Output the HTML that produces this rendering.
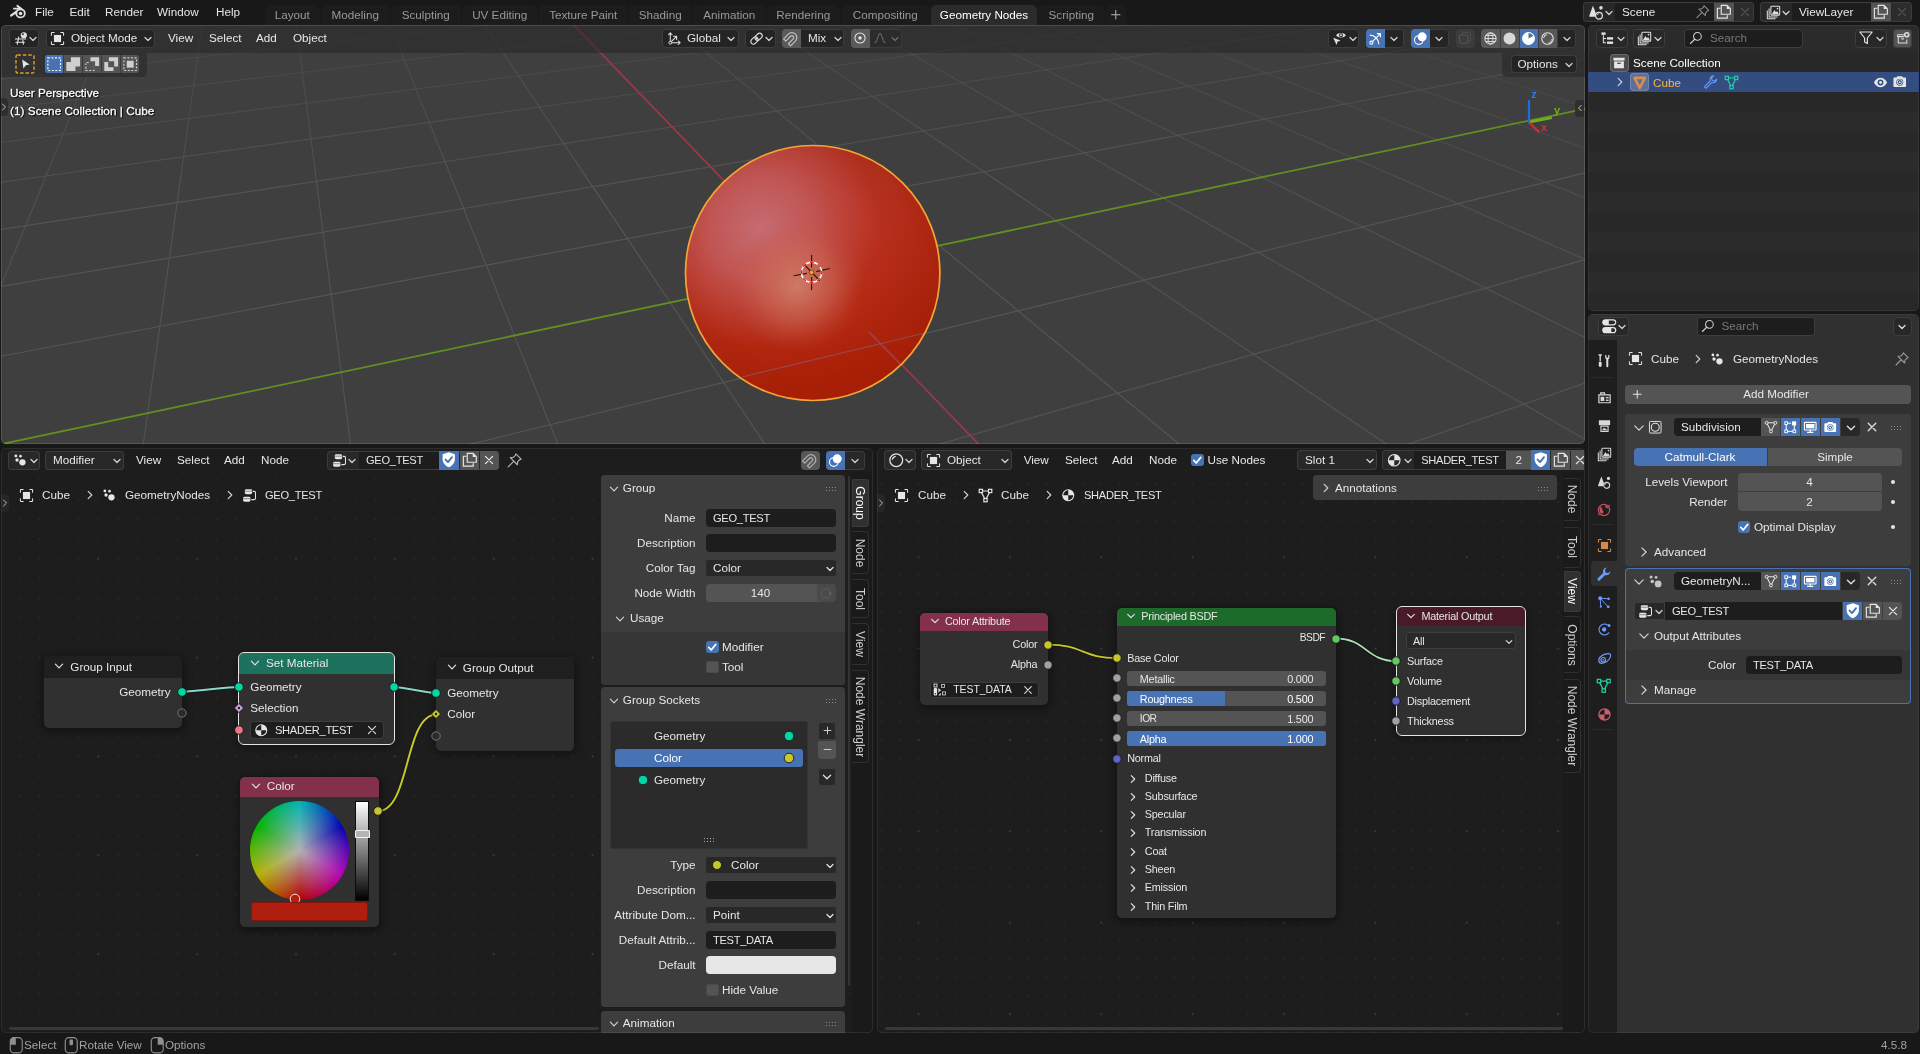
<!DOCTYPE html>
<html lang="en"><head><meta charset="utf-8"><title>Blender</title>
<style>
html,body{margin:0;padding:0;background:#181818;}
body{width:1920px;height:1054px;position:relative;overflow:hidden;font-family:"Liberation Sans", sans-serif;font-size:12px;}
div,svg{position:absolute;box-sizing:border-box;}
svg{overflow:visible;}
.t{height:20px;line-height:20px;white-space:nowrap;}
.clip{overflow:hidden;}
#w{left:0;top:0;width:1920px;height:1054px;will-change:transform;}
</style></head>
<body>
<div id="w">
<svg style="left:8.75px;top:2.75px;" width="18.5" height="18.5" viewBox="0 0 16 16"><path d="M1.2 10.2 L7.3 5.6 L4.3 5.6 A0.8 0.8 0 0 1 4.3 4 L8 4 L6.7 3 A0.8 0.8 0 0 1 7.7 1.7 L13.6 6.3 A4.6 4.3 0 1 1 5.4 9.6 L2.3 11.6 A0.85 0.85 0 0 1 1.2 10.2 Z" fill="#e0e0e0"/><ellipse cx="10" cy="9" rx="2.9" ry="2.7" fill="#181818"/><ellipse cx="10" cy="9" rx="1.6" ry="1.5" fill="#e0e0e0"/></svg>
<div class="t" style="top:2px;color:#e6e6e6;font-size:11.7px;left:35px;">File</div>
<div class="t" style="top:2px;color:#e6e6e6;font-size:11.7px;left:69.5px;">Edit</div>
<div class="t" style="top:2px;color:#e6e6e6;font-size:11.7px;left:105px;">Render</div>
<div class="t" style="top:2px;color:#e6e6e6;font-size:11.7px;left:157px;">Window</div>
<div class="t" style="top:2px;color:#e6e6e6;font-size:11.7px;left:216px;">Help</div>
<div style="left:264.5px;top:4.5px;width:55.5px;height:21.5px;background:#1c1c1c;border-radius:5px 5px 0 0;"></div>
<div class="t" style="top:5px;color:#989898;font-size:11.7px;left:292.25px;transform:translateX(-50%);">Layout</div>
<div style="left:320.5px;top:4.5px;width:69.5px;height:21.5px;background:#1c1c1c;border-radius:5px 5px 0 0;"></div>
<div class="t" style="top:5px;color:#989898;font-size:11.7px;left:355.25px;transform:translateX(-50%);">Modeling</div>
<div style="left:390.5px;top:4.5px;width:70.5px;height:21.5px;background:#1c1c1c;border-radius:5px 5px 0 0;"></div>
<div class="t" style="top:5px;color:#989898;font-size:11.7px;left:425.75px;transform:translateX(-50%);">Sculpting</div>
<div style="left:461.5px;top:4.5px;width:76.5px;height:21.5px;background:#1c1c1c;border-radius:5px 5px 0 0;"></div>
<div class="t" style="top:5px;color:#989898;font-size:11.7px;left:499.75px;transform:translateX(-50%);">UV Editing</div>
<div style="left:538.5px;top:4.5px;width:89.5px;height:21.5px;background:#1c1c1c;border-radius:5px 5px 0 0;"></div>
<div class="t" style="top:5px;color:#989898;font-size:11.7px;left:583.25px;transform:translateX(-50%);">Texture Paint</div>
<div style="left:628.5px;top:4.5px;width:63.5px;height:21.5px;background:#1c1c1c;border-radius:5px 5px 0 0;"></div>
<div class="t" style="top:5px;color:#989898;font-size:11.7px;left:660.25px;transform:translateX(-50%);">Shading</div>
<div style="left:692.5px;top:4.5px;width:73.5px;height:21.5px;background:#1c1c1c;border-radius:5px 5px 0 0;"></div>
<div class="t" style="top:5px;color:#989898;font-size:11.7px;left:729.25px;transform:translateX(-50%);">Animation</div>
<div style="left:766.5px;top:4.5px;width:73.5px;height:21.5px;background:#1c1c1c;border-radius:5px 5px 0 0;"></div>
<div class="t" style="top:5px;color:#989898;font-size:11.7px;left:803.25px;transform:translateX(-50%);">Rendering</div>
<div style="left:840.5px;top:4.5px;width:89.5px;height:21.5px;background:#1c1c1c;border-radius:5px 5px 0 0;"></div>
<div class="t" style="top:5px;color:#989898;font-size:11.7px;left:885.25px;transform:translateX(-50%);">Compositing</div>
<div style="left:931px;top:4.5px;width:106px;height:21.5px;background:#2b2b2b;border-radius:5px 5px 0 0;"></div>
<div class="t" style="top:5px;color:#ffffff;font-size:11.7px;left:984px;transform:translateX(-50%);">Geometry Nodes</div>
<div style="left:1037.5px;top:4.5px;width:67.5px;height:21.5px;background:#1c1c1c;border-radius:5px 5px 0 0;"></div>
<div class="t" style="top:5px;color:#989898;font-size:11.7px;left:1071.25px;transform:translateX(-50%);">Scripting</div>
<div style="left:1105.5px;top:4.5px;width:20.5px;height:21.5px;background:#1c1c1c;border-radius:5px 5px 0 0;"></div>
<svg style="left:1109px;top:7.75px;" width="13.5" height="13.5" viewBox="0 0 16 16"><path d="M8 2.5 V13.5 M2.5 8 H13.5" stroke="#b4b4b4" stroke-width="1.2" fill="none"/></svg>
<div style="left:1583px;top:2px;width:171px;height:20px;background:#282828;border-radius:4px;box-shadow:inset 0 0 0 1px #3d3d3d;"></div>
<div style="left:1614.5px;top:3px;width:99px;height:18px;background:#1d1d1d;"></div>
<div style="left:1714px;top:3px;width:20px;height:18px;background:#545454;"></div>
<div style="left:1734.5px;top:3px;width:18.5px;height:18px;background:#2c2c2c;border-radius:0 3px 3px 0;"></div>
<svg style="left:1587.5px;top:3.5px;" width="17" height="17" viewBox="0 0 16 16"><path d="M4.6 1.6 C5.6 4 7 7.4 7.6 9.6 A3.4 3.4 0 0 0 6.4 12 H1.8 A0.7 0.7 0 0 1 1.2 11 Z" fill="#e0e0e0"/><circle cx="10.3" cy="11" r="3.2" fill="none" stroke="#e0e0e0" stroke-width="1.2"/><path d="M8.6 10.4 A1.9 1.9 0 0 1 10 9.1" fill="none" stroke="#e0e0e0" stroke-width="0.9"/><circle cx="12.2" cy="3.6" r="1.7" fill="#e0e0e0"/></svg>
<svg style="left:1602.5px;top:6.5px;" width="12" height="12" viewBox="0 0 12 12"><path d="M3 4.5 L6 7.5 L9 4.5" fill="none" stroke="#cfcfcf" stroke-width="1.3" stroke-linecap="round" stroke-linejoin="round"/></svg>
<div class="t" style="top:2px;color:#e6e6e6;font-size:11.7px;left:1622px;">Scene</div>
<svg style="left:1695.25px;top:4.25px;" width="15.5" height="15.5" viewBox="0 0 16 16"><path d="M9.3 1.8 L14.2 6.7 L12.9 7.2 L11 9.1 L10.7 12 L4 5.3 L6.9 5 L8.8 3.1 Z" fill="none" stroke="#8a8a8a" stroke-width="1.1" stroke-linejoin="round"/><path d="M7 9 L2 14" stroke="#8a8a8a" stroke-width="1.1" stroke-linecap="round"/></svg>
<svg style="left:1716.25px;top:4.25px;" width="15.5" height="15.5" viewBox="0 0 16 16"><path d="M4.6 4.4 H1.4 V14.6 H11.6 V11.6" fill="none" stroke="#e6e6e6" stroke-width="1.2" stroke-linejoin="round"/><path d="M5.4 1.4 H11.4 L14.8 4.8 V10.6 H5.4 Z" fill="none" stroke="#e6e6e6" stroke-width="1.2" stroke-linejoin="round"/><path d="M11 1.4 V5.2 H14.8 Z" fill="#e6e6e6"/></svg>
<svg style="left:1738.5px;top:6px;" width="12" height="12" viewBox="0 0 12 12"><path d="M2.4 2.4 L9.6 9.6 M9.6 2.4 L2.4 9.6" fill="none" stroke="#555" stroke-width="1.3" stroke-linecap="round"/></svg>
<div style="left:1760px;top:2px;width:152px;height:20px;background:#282828;border-radius:4px;box-shadow:inset 0 0 0 1px #3d3d3d;"></div>
<div style="left:1791.5px;top:3px;width:79px;height:18px;background:#1d1d1d;"></div>
<div style="left:1871px;top:3px;width:20px;height:18px;background:#545454;"></div>
<div style="left:1891.5px;top:3px;width:19.5px;height:18px;background:#2c2c2c;border-radius:0 3px 3px 0;"></div>
<svg style="left:1765.5px;top:4.5px;" width="15" height="15" viewBox="0 0 16 16"><rect x="5.2" y="1.4" width="9.4" height="9.4" rx="0.8" fill="none" stroke="#e0e0e0" stroke-width="1.1"/><path d="M6.2 9.8 L9 5.4 L10.6 7.6 L11.8 6.4 L13.8 9.8 Z" fill="#e0e0e0"/><circle cx="12.3" cy="3.8" r="0.9" fill="#e0e0e0"/><path d="M3.3 3.6 V12.7 H12.4 M1.4 5.8 V14.6 H10.2" fill="none" stroke="#e0e0e0" stroke-width="1.1" stroke-linejoin="round"/></svg>
<svg style="left:1779.5px;top:6.5px;" width="12" height="12" viewBox="0 0 12 12"><path d="M3 4.5 L6 7.5 L9 4.5" fill="none" stroke="#cfcfcf" stroke-width="1.3" stroke-linecap="round" stroke-linejoin="round"/></svg>
<div class="t" style="top:2px;color:#e6e6e6;font-size:11.7px;left:1799px;">ViewLayer</div>
<svg style="left:1873.25px;top:4.25px;" width="15.5" height="15.5" viewBox="0 0 16 16"><path d="M4.6 4.4 H1.4 V14.6 H11.6 V11.6" fill="none" stroke="#e6e6e6" stroke-width="1.2" stroke-linejoin="round"/><path d="M5.4 1.4 H11.4 L14.8 4.8 V10.6 H5.4 Z" fill="none" stroke="#e6e6e6" stroke-width="1.2" stroke-linejoin="round"/><path d="M11 1.4 V5.2 H14.8 Z" fill="#e6e6e6"/></svg>
<svg style="left:1895.5px;top:6px;" width="12" height="12" viewBox="0 0 12 12"><path d="M2.4 2.4 L9.6 9.6 M9.6 2.4 L2.4 9.6" fill="none" stroke="#555" stroke-width="1.3" stroke-linecap="round"/></svg>
<div class="clip" style="left:1px;top:25px;width:1583.5px;height:419px;background:#3f3f3f;border-radius:5px;"><svg style="left:0;top:0" width="1584" height="419" viewBox="0 0 1584 419"><defs><linearGradient id="sb" x1="0" y1="0" x2="0.25" y2="1"><stop offset="0" stop-color="#b23b2f"/><stop offset="0.45" stop-color="#ba3322"/><stop offset="1" stop-color="#ad2107"/></linearGradient><radialGradient id="sh1" cx="0.30" cy="0.33" r="0.46"><stop offset="0" stop-color="#c66f77" stop-opacity="0.95"/><stop offset="0.45" stop-color="#c5676c" stop-opacity="0.65"/><stop offset="1" stop-color="#c05555" stop-opacity="0"/></radialGradient><radialGradient id="sh2" cx="0.44" cy="0.55" r="0.26"><stop offset="0" stop-color="#d07d68" stop-opacity="0.95"/><stop offset="0.55" stop-color="#cc6a56" stop-opacity="0.5"/><stop offset="1" stop-color="#c85040" stop-opacity="0"/></radialGradient><radialGradient id="sh3" cx="0.42" cy="0.45" r="0.6"><stop offset="0.55" stop-color="#a01c04" stop-opacity="0"/><stop offset="1" stop-color="#9c1c04" stop-opacity="0.55"/></radialGradient><linearGradient id="fade" x1="0" y1="0" x2="0" y2="1"><stop offset="0" stop-color="#3f3f3f" stop-opacity="0.55"/><stop offset="1" stop-color="#3f3f3f" stop-opacity="0"/></linearGradient><clipPath id="sc"><ellipse cx="811.7" cy="248" rx="127.2" ry="127.5"/></clipPath></defs><g stroke-width="1.15" fill="none"><line x1="-584.86" y1="-55" x2="-2033.1" y2="455" stroke="#575757" stroke-opacity="0.23"/><line x1="-505.46" y1="-55" x2="-1815.95" y2="455" stroke="#575757" stroke-opacity="0.29"/><line x1="-426.06" y1="-55" x2="-1598.83" y2="455" stroke="#575757" stroke-opacity="0.34"/><line x1="-346.68" y1="-55" x2="-1381.73" y2="455" stroke="#575757" stroke-opacity="0.4"/><line x1="-267.3" y1="-55" x2="-1164.66" y2="455" stroke="#575757" stroke-opacity="0.45"/><line x1="-187.93" y1="-55" x2="-947.61" y2="455" stroke="#575757" stroke-opacity="0.51"/><line x1="-108.57" y1="-55" x2="-730.58" y2="455" stroke="#575757" stroke-opacity="0.56"/><line x1="-29.22" y1="-55" x2="-513.58" y2="455" stroke="#575757" stroke-opacity="0.61"/><line x1="50.13" y1="-55" x2="-296.6" y2="455" stroke="#575757" stroke-opacity="0.67"/><line x1="129.46" y1="-55" x2="-79.64" y2="455" stroke="#575757" stroke-opacity="0.72"/><line x1="208.79" y1="-55" x2="137.29" y2="455" stroke="#575757" stroke-opacity="0.78"/><line x1="288.1" y1="-55" x2="354.2" y2="455" stroke="#575757" stroke-opacity="0.83"/><line x1="367.41" y1="-55" x2="571.08" y2="455" stroke="#575757" stroke-opacity="0.89"/><line x1="446.71" y1="-55" x2="787.94" y2="455" stroke="#575757" stroke-opacity="0.94"/><line x1="605.28" y1="-55" x2="1221.59" y2="455" stroke="#575757" stroke-opacity="0.94"/><line x1="684.56" y1="-55" x2="1438.38" y2="455" stroke="#575757" stroke-opacity="0.89"/><line x1="763.82" y1="-55" x2="1655.15" y2="455" stroke="#575757" stroke-opacity="0.83"/><line x1="843.08" y1="-55" x2="1871.89" y2="455" stroke="#575757" stroke-opacity="0.78"/><line x1="922.33" y1="-55" x2="2088.61" y2="455" stroke="#575757" stroke-opacity="0.72"/><line x1="1001.57" y1="-55" x2="2305.3" y2="455" stroke="#575757" stroke-opacity="0.67"/><line x1="1080.8" y1="-55" x2="2521.98" y2="455" stroke="#575757" stroke-opacity="0.61"/><line x1="1160.02" y1="-55" x2="2738.62" y2="455" stroke="#575757" stroke-opacity="0.56"/><line x1="1239.23" y1="-55" x2="2955.25" y2="455" stroke="#575757" stroke-opacity="0.51"/><line x1="1318.44" y1="-55" x2="3171.85" y2="455" stroke="#575757" stroke-opacity="0.45"/><line x1="1397.63" y1="-55" x2="3388.42" y2="455" stroke="#575757" stroke-opacity="0.4"/><line x1="1476.82" y1="-55" x2="3604.98" y2="455" stroke="#575757" stroke-opacity="0.34"/><line x1="1556" y1="-55" x2="3821.5" y2="455" stroke="#575757" stroke-opacity="0.29"/><line x1="1635.17" y1="-55" x2="4038.01" y2="455" stroke="#575757" stroke-opacity="0.23"/><line x1="-3147.87" y1="-55" x2="-14896.72" y2="455" stroke="#575757" stroke-opacity="0.12"/><line x1="-2968.32" y1="-55" x2="-14405.72" y2="455" stroke="#575757" stroke-opacity="0.12"/><line x1="-2788.78" y1="-55" x2="-13914.73" y2="455" stroke="#575757" stroke-opacity="0.12"/><line x1="-2609.24" y1="-55" x2="-13423.74" y2="455" stroke="#575757" stroke-opacity="0.12"/><line x1="-2429.7" y1="-55" x2="-12932.76" y2="455" stroke="#575757" stroke-opacity="0.12"/><line x1="-2250.17" y1="-55" x2="-12441.78" y2="455" stroke="#575757" stroke-opacity="0.12"/><line x1="-2070.63" y1="-55" x2="-11950.81" y2="455" stroke="#575757" stroke-opacity="0.12"/><line x1="-1891.1" y1="-55" x2="-11459.83" y2="455" stroke="#575757" stroke-opacity="0.12"/><line x1="-1711.56" y1="-55" x2="-10968.87" y2="455" stroke="#575757" stroke-opacity="0.12"/><line x1="-1532.03" y1="-55" x2="-10477.9" y2="455" stroke="#575757" stroke-opacity="0.12"/><line x1="-1352.5" y1="-55" x2="-9986.94" y2="455" stroke="#575757" stroke-opacity="0.12"/><line x1="-1172.97" y1="-55" x2="-9495.99" y2="455" stroke="#575757" stroke-opacity="0.12"/><line x1="-993.45" y1="-55" x2="-9005.04" y2="455" stroke="#575757" stroke-opacity="0.12"/><line x1="-813.92" y1="-55" x2="-8514.09" y2="455" stroke="#575757" stroke-opacity="0.15"/><line x1="-634.4" y1="-55" x2="-8023.14" y2="455" stroke="#575757" stroke-opacity="0.2"/><line x1="-454.87" y1="-55" x2="-7532.2" y2="455" stroke="#575757" stroke-opacity="0.25"/><line x1="-275.35" y1="-55" x2="-7041.27" y2="455" stroke="#575757" stroke-opacity="0.3"/><line x1="-95.83" y1="-55" x2="-6550.34" y2="455" stroke="#575757" stroke-opacity="0.35"/><line x1="83.69" y1="-55" x2="-6059.41" y2="455" stroke="#575757" stroke-opacity="0.4"/><line x1="263.2" y1="-55" x2="-5568.48" y2="455" stroke="#575757" stroke-opacity="0.45"/><line x1="442.72" y1="-55" x2="-5077.56" y2="455" stroke="#575757" stroke-opacity="0.5"/><line x1="622.23" y1="-55" x2="-4586.65" y2="455" stroke="#575757" stroke-opacity="0.55"/><line x1="801.75" y1="-55" x2="-4095.74" y2="455" stroke="#575757" stroke-opacity="0.6"/><line x1="981.26" y1="-55" x2="-3604.83" y2="455" stroke="#575757" stroke-opacity="0.65"/><line x1="1160.77" y1="-55" x2="-3113.92" y2="455" stroke="#575757" stroke-opacity="0.7"/><line x1="1340.28" y1="-55" x2="-2623.02" y2="455" stroke="#575757" stroke-opacity="0.75"/><line x1="1519.78" y1="-55" x2="-2132.13" y2="455" stroke="#575757" stroke-opacity="0.8"/><line x1="1699.29" y1="-55" x2="-1641.23" y2="455" stroke="#575757" stroke-opacity="0.85"/><line x1="1878.79" y1="-55" x2="-1150.35" y2="455" stroke="#575757" stroke-opacity="0.9"/><line x1="2058.29" y1="-55" x2="-659.46" y2="455" stroke="#575757" stroke-opacity="0.95"/><line x1="2417.29" y1="-55" x2="322.3" y2="455" stroke="#575757" stroke-opacity="0.95"/><line x1="2596.79" y1="-55" x2="813.17" y2="455" stroke="#575757" stroke-opacity="0.9"/><line x1="2776.29" y1="-55" x2="1304.04" y2="455" stroke="#575757" stroke-opacity="0.85"/></g><rect x="0" y="0" width="1584" height="170" fill="url(#fade)"/><line x1="0" y1="419.25" x2="1584" y2="83.76" stroke="#618f22" stroke-width="1.8"/><line x1="572.63" y1="0" x2="977.46" y2="419" stroke="#a0364a" stroke-width="1.7"/><ellipse cx="811.7" cy="248" rx="127.2" ry="127.5" fill="url(#sb)"/><g clip-path="url(#sc)"><ellipse cx="811.7" cy="248" rx="127.2" ry="127.5" fill="url(#sh3)"/><ellipse cx="811.7" cy="248" rx="127.2" ry="127.5" fill="url(#sh1)"/><ellipse cx="811.7" cy="248" rx="127.2" ry="127.5" fill="url(#sh2)"/><line x1="741" y1="352" x2="924" y2="308" stroke="#8d5560" stroke-width="1.2" stroke-opacity="0.8"/><line x1="868" y1="307" x2="925" y2="365" stroke="#a04660" stroke-width="1.5" stroke-opacity="0.9"/></g><ellipse cx="811.7" cy="248" rx="127.2" ry="127.5" fill="none" stroke="#f5a335" stroke-width="1.7"/><g stroke="#2a1612" stroke-width="1.15" fill="none"><path d="M810.6 229.9 V242.6 M810.6 252 V264.9 M792.6 250.8 L805.9 248.4 M815.3 246.6 L828.8 243.5 M803 239.3 L818.6 255.5"/></g><circle cx="810.6" cy="247.4" r="10.1" fill="none" stroke="#ffffff" stroke-width="1.4"/><circle cx="810.6" cy="247.4" r="10.1" fill="none" stroke="#f02020" stroke-width="1.4" stroke-dasharray="3.97 3.97" stroke-dashoffset="2"/><circle cx="810.6" cy="247.4" r="2.3" fill="#f5a32c" stroke="#5a2a00" stroke-width="0.7"/><g fill="none" stroke-width="2.2"><line x1="1528" y1="97.1" x2="1550.8" y2="92.6" stroke="#6fb01c" stroke-width="2.6"/><line x1="1527.5" y1="97.1" x2="1538.3" y2="107.1" stroke="#c4303e"/><line x1="1528" y1="97.6" x2="1528" y2="75.1" stroke="#1a6fe0"/></g><text x="1533" y="72.6" font-size="11" font-weight="bold" fill="#2a7be8" font-family='"Liberation Sans", sans-serif' text-anchor="middle">z</text><text x="1556" y="89" font-size="11" font-weight="bold" fill="#6fb01c" font-family='"Liberation Sans", sans-serif' text-anchor="middle">y</text><text x="1543" y="105.5" font-size="11" font-weight="bold" fill="#d03040" font-family='"Liberation Sans", sans-serif' text-anchor="middle">x</text></svg></div>
<div style="left:1px;top:25px;width:1583.5px;height:27.5px;background:rgba(38,38,38,0.55);border-radius:5px 5px 0 0;"></div>
<div style="left:1px;top:52.5px;width:146px;height:24px;background:rgba(38,38,38,0.55);border-radius:0 0 5px 0;"></div>
<div style="left:1px;top:25px;width:1583.5px;height:419px;border-radius:5px;box-shadow:inset 0 0 0 1px rgba(255,255,255,0.13);"></div>
<div style="left:9px;top:28.5px;width:30px;height:19px;background:rgba(34,34,34,0.85);border-radius:4px;box-shadow:inset 0 0 0 1px #3d3d3d;"></div>
<svg style="left:13.5px;top:30.5px;" width="15" height="15" viewBox="0 0 16 16"><path d="M1.5 8.5 H12.5 M2 12 H11 M5 6.5 L3.5 14 M9.5 10 L10 14" stroke="#e0e0e0" stroke-width="1.2" fill="none" stroke-linecap="round"/><circle cx="10.5" cy="4.5" r="3.3" fill="#e0e0e0"/><circle cx="9.5" cy="3.4" r="1.1" fill="#3a3a3a"/></svg>
<svg style="left:27px;top:33px;" width="12" height="12" viewBox="0 0 12 12"><path d="M3 4.5 L6 7.5 L9 4.5" fill="none" stroke="#cfcfcf" stroke-width="1.3" stroke-linecap="round" stroke-linejoin="round"/></svg>
<div style="left:46px;top:28.5px;width:109px;height:19px;background:rgba(34,34,34,0.85);border-radius:4px;box-shadow:inset 0 0 0 1px #3d3d3d;"></div>
<svg style="left:50px;top:30.5px;" width="15" height="15" viewBox="0 0 16 16"><rect x="4.2" y="4.2" width="7.6" height="7.6" fill="#e6e6e6"/><path d="M1.5 4.5 V2.3 A0.8 0.8 0 0 1 2.3 1.5 H4.5 M11.5 1.5 H13.7 A0.8 0.8 0 0 1 14.5 2.3 V4.5 M14.5 11.5 V13.7 A0.8 0.8 0 0 1 13.7 14.5 H11.5 M4.5 14.5 H2.3 A0.8 0.8 0 0 1 1.5 13.7 V11.5" fill="none" stroke="#e6e6e6" stroke-width="1.1" stroke-linecap="round"/></svg>
<div class="t" style="top:28px;color:#e6e6e6;font-size:11.7px;left:71px;">Object Mode</div>
<svg style="left:141.5px;top:33px;" width="12" height="12" viewBox="0 0 12 12"><path d="M3 4.5 L6 7.5 L9 4.5" fill="none" stroke="#cfcfcf" stroke-width="1.3" stroke-linecap="round" stroke-linejoin="round"/></svg>
<div class="t" style="top:28px;color:#e6e6e6;font-size:11.7px;left:168px;">View</div>
<div class="t" style="top:28px;color:#e6e6e6;font-size:11.7px;left:209px;">Select</div>
<div class="t" style="top:28px;color:#e6e6e6;font-size:11.7px;left:256px;">Add</div>
<div class="t" style="top:28px;color:#e6e6e6;font-size:11.7px;left:293px;">Object</div>
<svg style="left:15px;top:54px;" width="20" height="20" viewBox="0 0 20 20"><rect x="1" y="1" width="18" height="18" rx="1.5" fill="none" stroke="#e0a030" stroke-width="1.4" stroke-dasharray="3.4 2"/><path d="M7.2 5.4 L14.6 10.6 L10.8 11.2 L8.4 14.6 Z" fill="#e6e6e6"/></svg>
<div style="left:45px;top:55px;width:94px;height:18px;background:#545454;border-radius:3px;"></div>
<div style="left:45px;top:55px;width:18.4px;height:18px;background:#4772b3;border-radius:3px 0 0 3px;"></div>
<div style="left:63.4px;top:55px;width:1px;height:18px;background:#3a3a3a;"></div>
<div style="left:82.3px;top:55px;width:1px;height:18px;background:#3a3a3a;"></div>
<div style="left:101.2px;top:55px;width:1px;height:18px;background:#3a3a3a;"></div>
<div style="left:120.1px;top:55px;width:1px;height:18px;background:#3a3a3a;"></div>
<svg style="left:45.1px;top:54.8px;" width="18.4" height="18.4" viewBox="0 0 16 16"><rect x="2.5" y="2.5" width="11" height="11" fill="none" stroke="#ffffff" stroke-width="1" stroke-dasharray="1.7 1.4"/></svg>
<svg style="left:64px;top:54.8px;" width="18.4" height="18.4" viewBox="0 0 16 16"><path d="M6 2 H14 V10 H10 V14 H2 V6 H6 Z" fill="#cfcfcf"/></svg>
<svg style="left:82.9px;top:54.8px;" width="18.4" height="18.4" viewBox="0 0 16 16"><path d="M6.5 2 H14 V9.5 H10.5 V5.5 H6.5 Z" fill="#cfcfcf"/><path d="M5 6.5 H2.5 V13.5 H9.5 V11" fill="none" stroke="#cfcfcf" stroke-width="1" stroke-dasharray="1.7 1.4"/></svg>
<svg style="left:101.8px;top:54.8px;" width="18.4" height="18.4" viewBox="0 0 16 16"><path d="M6 2 H14 V10 H10.6 V5.4 H6 Z M2 6 H5.4 V10.6 H10 V14 H2 Z" fill="#cfcfcf"/></svg>
<svg style="left:120.7px;top:54.8px;" width="18.4" height="18.4" viewBox="0 0 16 16"><rect x="5" y="5" width="6" height="6" fill="#cfcfcf"/><rect x="2.5" y="2.5" width="11" height="11" fill="none" stroke="#cfcfcf" stroke-width="1" stroke-dasharray="1.7 1.4"/></svg>
<div class="t" style="top:83px;color:#ffffff;font-size:11.7px;left:10px;text-shadow:0 0 2px rgba(0,0,0,0.9),1px 1px 1px rgba(0,0,0,0.9);-webkit-text-stroke:0.3px #fff;">User Perspective</div>
<div class="t" style="top:101px;color:#ffffff;font-size:11.7px;letter-spacing:0.06px;left:10px;text-shadow:0 0 2px rgba(0,0,0,0.9),1px 1px 1px rgba(0,0,0,0.9);-webkit-text-stroke:0.3px #fff;">(1) Scene Collection | Cube</div>
<div style="left:1px;top:98px;width:7px;height:18px;background:rgba(40,40,40,0.7);border-radius:0 4px 4px 0;"></div>
<svg style="left:-2px;top:101px;" width="12" height="12" viewBox="0 0 12 12"><path d="M4.5 3 L7.5 6 L4.5 9" fill="none" stroke="#bdbdbd" stroke-width="1" stroke-linecap="round" stroke-linejoin="round"/></svg>
<div style="left:1575px;top:99.5px;width:9px;height:17px;background:rgba(44,44,44,0.85);border-radius:4px 0 0 4px;"></div>
<svg style="left:1574px;top:102px;" width="12" height="12" viewBox="0 0 12 12"><path d="M7.5 3 L4.5 6 L7.5 9" fill="none" stroke="#bdbdbd" stroke-width="1"/></svg>
<div style="left:661.5px;top:28.5px;width:77px;height:19px;background:rgba(34,34,34,0.85);border-radius:4px;box-shadow:inset 0 0 0 1px #3d3d3d;"></div>
<svg style="left:666.5px;top:30.5px;" width="15" height="15" viewBox="0 0 16 16"><path d="M3.5 12.5 V2 M1.6 4 L3.5 2 L5.4 4 M3.5 12.5 H14 M12 10.6 L14 12.5 L12 14.4 M3.5 12.5 L10 6 M7 5.7 L10.3 5.7 L10.3 9" fill="none" stroke="#e0e0e0" stroke-width="1.1" stroke-linejoin="round" stroke-linecap="round"/><circle cx="3.5" cy="12.5" r="1.5" fill="#262626" stroke="#e0e0e0" stroke-width="1"/></svg>
<div class="t" style="top:28px;color:#e6e6e6;font-size:11.7px;left:687px;">Global</div>
<svg style="left:725px;top:33px;" width="12" height="12" viewBox="0 0 12 12"><path d="M3 4.5 L6 7.5 L9 4.5" fill="none" stroke="#cfcfcf" stroke-width="1.3" stroke-linecap="round" stroke-linejoin="round"/></svg>
<div style="left:744.5px;top:28.5px;width:31px;height:19px;background:rgba(34,34,34,0.85);border-radius:4px;box-shadow:inset 0 0 0 1px #3d3d3d;"></div>
<svg style="left:748.5px;top:30.5px;" width="15" height="15" viewBox="0 0 16 16"><rect x="1.2" y="5.4" width="8.6" height="5.6" rx="2.8" fill="none" stroke="#e0e0e0" stroke-width="1.2" transform="rotate(-45 5.5 8.2) translate(-1.2 1.6)"/><rect x="6.2" y="5.4" width="8.6" height="5.6" rx="2.8" fill="none" stroke="#e0e0e0" stroke-width="1.2" transform="rotate(-45 10.5 8.2) translate(1.2 -1.6)"/><circle cx="8" cy="8" r="1.1" fill="#e0e0e0"/></svg>
<svg style="left:763px;top:33px;" width="12" height="12" viewBox="0 0 12 12"><path d="M3 4.5 L6 7.5 L9 4.5" fill="none" stroke="#cfcfcf" stroke-width="1.3" stroke-linecap="round" stroke-linejoin="round"/></svg>
<div style="left:782px;top:28.5px;width:62px;height:19px;background:rgba(34,34,34,0.85);border-radius:4px;box-shadow:inset 0 0 0 1px #3d3d3d;"></div>
<div style="left:782px;top:28.5px;width:19px;height:19px;background:#5a5a5a;border-radius:4px 0 0 4px;"></div>
<svg style="left:782.75px;top:29.25px;" width="17.5" height="17.5" viewBox="0 0 16 16"><path d="M3.5 2.6 H6.3 V8.8 A1.7 1.7 0 0 0 9.7 8.8 V2.6 H12.5 V8.8 A4.5 4.5 0 0 1 3.5 8.8 Z" fill="none" stroke="#c0c0c0" stroke-width="1.1" stroke-linejoin="round" transform="rotate(225 8 8) translate(0 -0.6)"/></svg>
<div class="t" style="top:28px;color:#e6e6e6;font-size:11.7px;left:808px;">Mix</div>
<svg style="left:832px;top:33px;" width="12" height="12" viewBox="0 0 12 12"><path d="M3 4.5 L6 7.5 L9 4.5" fill="none" stroke="#cfcfcf" stroke-width="1.3" stroke-linecap="round" stroke-linejoin="round"/></svg>
<div style="left:850.5px;top:28.5px;width:51px;height:19px;background:rgba(40,40,40,0.6);border-radius:4px;box-shadow:inset 0 0 0 1px rgba(70,70,70,0.6);"></div>
<div style="left:850.5px;top:28.5px;width:19px;height:19px;background:#5a5a5a;border-radius:4px 0 0 4px;"></div>
<svg style="left:853px;top:31px;" width="14" height="14" viewBox="0 0 16 16"><circle cx="8" cy="8" r="5.8" fill="none" stroke="#e6e6e6" stroke-width="1.2"/><circle cx="8" cy="8" r="2" fill="#e6e6e6"/></svg>
<svg style="left:873px;top:31px;" width="14" height="14" viewBox="0 0 16 16"><path d="M1.5 13.5 C5.5 13.5 5.6 2.5 8 2.5 C10.4 2.5 10.5 13.5 14.5 13.5" fill="none" stroke="#6a6a6a" stroke-width="1.2"/></svg>
<svg style="left:889px;top:33px;" width="12" height="12" viewBox="0 0 12 12"><path d="M3 4.5 L6 7.5 L9 4.5" fill="none" stroke="#6a6a6a" stroke-width="1.3" stroke-linecap="round" stroke-linejoin="round"/></svg>
<div style="left:1328px;top:28.5px;width:31px;height:19px;background:rgba(34,34,34,0.85);border-radius:4px;box-shadow:inset 0 0 0 1px #3d3d3d;"></div>
<svg style="left:1331.5px;top:30.5px;" width="15" height="15" viewBox="0 0 16 16"><path d="M4.4 4.6 C6.4 1.4 12.6 1.4 14.8 4.6 C12.6 7.8 6.4 7.8 4.4 4.6 Z" fill="#e0e0e0"/><circle cx="9.6" cy="4.4" r="2.1" fill="#2a2a2a"/><circle cx="9.6" cy="4.4" r="1" fill="#e0e0e0"/><path d="M1.2 7.2 L9.2 10.2 L5.9 11.4 L4.9 14.8 Z" fill="#e0e0e0"/></svg>
<svg style="left:1346.5px;top:33px;" width="12" height="12" viewBox="0 0 12 12"><path d="M3 4.5 L6 7.5 L9 4.5" fill="none" stroke="#cfcfcf" stroke-width="1.3" stroke-linecap="round" stroke-linejoin="round"/></svg>
<div style="left:1366px;top:28.5px;width:38px;height:19px;background:rgba(34,34,34,0.85);border-radius:4px;box-shadow:inset 0 0 0 1px #3d3d3d;"></div>
<div style="left:1366px;top:28.5px;width:18.5px;height:19px;background:#4772b3;border-radius:4px 0 0 4px;"></div>
<svg style="left:1367.5px;top:30.5px;" width="15" height="15" viewBox="0 0 16 16"><path d="M1.8 4.4 C7 4.4 11.6 8.6 11.6 14.2" fill="none" stroke="#ffffff" stroke-width="1.2"/><path d="M4.7 11.3 L13 3 M9.4 2.8 H13.2 V6.6" fill="none" stroke="#ffffff" stroke-width="1.2" stroke-linejoin="round"/><circle cx="3.6" cy="12.4" r="1.6" fill="none" stroke="#ffffff" stroke-width="1.1"/></svg>
<svg style="left:1388px;top:33px;" width="12" height="12" viewBox="0 0 12 12"><path d="M3 4.5 L6 7.5 L9 4.5" fill="none" stroke="#cfcfcf" stroke-width="1.3" stroke-linecap="round" stroke-linejoin="round"/></svg>
<div style="left:1411px;top:28.5px;width:38px;height:19px;background:rgba(34,34,34,0.85);border-radius:4px;box-shadow:inset 0 0 0 1px #3d3d3d;"></div>
<div style="left:1411px;top:28.5px;width:18.5px;height:19px;background:#4772b3;border-radius:4px 0 0 4px;"></div>
<svg style="left:1412.5px;top:30.5px;" width="15" height="15" viewBox="0 0 16 16"><circle cx="6.2" cy="9.6" r="4.6" fill="none" stroke="#ffffff" stroke-width="1.2"/><circle cx="9.8" cy="6.2" r="4.8" fill="#ffffff"/><path d="M5.4 8.8 A4.6 4.6 0 0 0 10.6 10.8 A4.8 4.8 0 0 1 5.4 8.8" fill="#4772b3"/></svg>
<svg style="left:1433px;top:33px;" width="12" height="12" viewBox="0 0 12 12"><path d="M3 4.5 L6 7.5 L9 4.5" fill="none" stroke="#cfcfcf" stroke-width="1.3" stroke-linecap="round" stroke-linejoin="round"/></svg>
<div style="left:1456px;top:28.5px;width:18.5px;height:19px;background:rgba(70,70,70,0.55);border-radius:4px;"></div>
<svg style="left:1458px;top:31px;" width="14" height="14" viewBox="0 0 16 16"><rect x="1.8" y="4.6" width="9.4" height="9.4" rx="1" fill="none" stroke="#5a5a5a" stroke-width="1.1"/><path d="M4.6 4.4 V2.6 A0.8 0.8 0 0 1 5.4 1.8 H13.4 A0.8 0.8 0 0 1 14.2 2.6 V10.6 A0.8 0.8 0 0 1 13.4 11.4 H11.4" fill="none" stroke="#5a5a5a" stroke-width="1.1" stroke-dasharray="2 1.4"/></svg>
<div style="left:1481px;top:28.5px;width:76px;height:19px;background:#585858;border-radius:4px 0 0 4px;"></div>
<div style="left:1519px;top:28.5px;width:19px;height:19px;background:#4772b3;"></div>
<div style="left:1499.5px;top:28.5px;width:1px;height:19px;background:#3e3e3e;"></div>
<div style="left:1518.5px;top:28.5px;width:1px;height:19px;background:#3e3e3e;"></div>
<div style="left:1537.5px;top:28.5px;width:1px;height:19px;background:#3e3e3e;"></div>
<svg style="left:1483px;top:30.5px;" width="15" height="15" viewBox="0 0 16 16"><circle cx="8" cy="8" r="6" fill="none" stroke="#e0e0e0" stroke-width="1.1"/><ellipse cx="8" cy="8" rx="2.6" ry="6" fill="none" stroke="#e0e0e0" stroke-width="1"/><path d="M2 8 H14 M3 4.8 H13 M3 11.2 H13" stroke="#e0e0e0" stroke-width="1" fill="none"/></svg>
<svg style="left:1502px;top:30.5px;" width="15" height="15" viewBox="0 0 16 16"><circle cx="8" cy="8" r="6.3" fill="#d8d8d8"/></svg>
<svg style="left:1521px;top:30.5px;" width="15" height="15" viewBox="0 0 16 16"><circle cx="8" cy="8" r="6.3" fill="none" stroke="#ffffff" stroke-width="1.1"/><path d="M8 1.7 A6.3 6.3 0 0 0 8 14.3 A6.3 6.3 0 0 0 13.6 5 L8 8 Z" fill="#ffffff"/></svg>
<svg style="left:1540px;top:30.5px;" width="15" height="15" viewBox="0 0 16 16"><circle cx="8" cy="8" r="6.1" fill="none" stroke="#e0e0e0" stroke-width="1.2"/><path d="M4 7 A4 4 0 0 1 7 4" fill="none" stroke="#e0e0e0" stroke-width="1.1" stroke-linecap="round"/><path d="M13 9 A5 5 0 0 1 9 13" fill="none" stroke="#e0e0e0" stroke-width="2.2" stroke-dasharray="0.8 0.8"/></svg>
<div style="left:1557px;top:28.5px;width:19px;height:19px;background:rgba(34,34,34,0.85);border-radius:0 4px 4px 0;box-shadow:inset 0 0 0 1px #3d3d3d;"></div>
<svg style="left:1560.5px;top:33px;" width="12" height="12" viewBox="0 0 12 12"><path d="M3 4.5 L6 7.5 L9 4.5" fill="none" stroke="#cfcfcf" stroke-width="1.3" stroke-linecap="round" stroke-linejoin="round"/></svg>
<div style="left:1502px;top:52.5px;width:82.5px;height:24px;background:rgba(38,38,38,0.55);border-radius:0 0 0 5px;"></div>
<div style="left:1510.5px;top:55px;width:66px;height:18px;background:rgba(34,34,34,0.85);border-radius:4px;box-shadow:inset 0 0 0 1px #3d3d3d;"></div>
<div class="t" style="top:54px;color:#e6e6e6;font-size:11.7px;left:1517.5px;">Options</div>
<svg style="left:1563px;top:59px;" width="12" height="12" viewBox="0 0 12 12"><path d="M3 4.5 L6 7.5 L9 4.5" fill="none" stroke="#cfcfcf" stroke-width="1.3" stroke-linecap="round" stroke-linejoin="round"/></svg>
<div style="left:1588px;top:25px;width:330.6px;height:286px;background:#282828;border-radius:5px;"></div>
<div style="left:1588px;top:72px;width:330.6px;height:20px;background:#2b2b2b;"></div>
<div style="left:1588px;top:112px;width:330.6px;height:20px;background:#2b2b2b;"></div>
<div style="left:1588px;top:152px;width:330.6px;height:20px;background:#2b2b2b;"></div>
<div style="left:1588px;top:192px;width:330.6px;height:20px;background:#2b2b2b;"></div>
<div style="left:1588px;top:232px;width:330.6px;height:20px;background:#2b2b2b;"></div>
<div style="left:1588px;top:272px;width:330.6px;height:20px;background:#2b2b2b;"></div>
<div style="left:1588px;top:25px;width:330.6px;height:27px;background:#2b2b2b;border-radius:5px 5px 0 0;"></div>
<div style="left:1588px;top:25px;width:330.6px;height:286px;border-radius:5px;box-shadow:inset 0 0 0 1px rgba(255,255,255,0.06);"></div>
<div style="left:1596px;top:28.5px;width:32px;height:19px;background:#282828;border-radius:4px;box-shadow:inset 0 0 0 1px #3d3d3d;"></div>
<svg style="left:1599.5px;top:30.5px;" width="15" height="15" viewBox="0 0 16 16"><rect x="1.5" y="1.5" width="4.5" height="2.6" fill="#e0e0e0"/><rect x="7.5" y="6.6" width="6.5" height="2.6" fill="#e0e0e0"/><rect x="7.5" y="11.2" width="6.5" height="2.6" fill="#e0e0e0"/><path d="M3.6 4.5 V12.5 H6.5 M3.6 8 H6.5" fill="none" stroke="#e0e0e0" stroke-width="1.1"/></svg>
<svg style="left:1615px;top:33px;" width="12" height="12" viewBox="0 0 12 12"><path d="M3 4.5 L6 7.5 L9 4.5" fill="none" stroke="#cfcfcf" stroke-width="1.3" stroke-linecap="round" stroke-linejoin="round"/></svg>
<div style="left:1633px;top:28.5px;width:32px;height:19px;background:#282828;border-radius:4px;box-shadow:inset 0 0 0 1px #3d3d3d;"></div>
<svg style="left:1637px;top:30.5px;" width="15" height="15" viewBox="0 0 16 16"><rect x="5.2" y="1.4" width="9.4" height="9.4" rx="0.8" fill="none" stroke="#e0e0e0" stroke-width="1.1"/><path d="M6.2 9.8 L9 5.4 L10.6 7.6 L11.8 6.4 L13.8 9.8 Z" fill="#e0e0e0"/><circle cx="12.3" cy="3.8" r="0.9" fill="#e0e0e0"/><path d="M3.3 3.6 V12.7 H12.4 M1.4 5.8 V14.6 H10.2" fill="none" stroke="#e0e0e0" stroke-width="1.1" stroke-linejoin="round"/></svg>
<svg style="left:1652px;top:33px;" width="12" height="12" viewBox="0 0 12 12"><path d="M3 4.5 L6 7.5 L9 4.5" fill="none" stroke="#cfcfcf" stroke-width="1.3" stroke-linecap="round" stroke-linejoin="round"/></svg>
<div style="left:1684px;top:28.5px;width:119px;height:19px;background:#1d1d1d;border-radius:4px;box-shadow:inset 0 0 0 1px #3d3d3d;"></div>
<svg style="left:1689px;top:31px;" width="14" height="14" viewBox="0 0 16 16"><circle cx="9.6" cy="6.2" r="4.4" fill="none" stroke="#d0d0d0" stroke-width="1.2"/><path d="M6.5 9.4 L1.6 14.3" stroke="#d0d0d0" stroke-width="1.3" stroke-linecap="round"/></svg>
<div class="t" style="top:28px;color:#777777;font-size:11.7px;left:1710px;">Search</div>
<div style="left:1855px;top:28.5px;width:32px;height:19px;background:#282828;border-radius:4px;box-shadow:inset 0 0 0 1px #3d3d3d;"></div>
<svg style="left:1858px;top:30px;" width="16" height="16" viewBox="0 0 16 16"><path d="M1.8 2 H14.2 L9.4 8 V13.6 L6.6 12 V8 Z" fill="none" stroke="#e0e0e0" stroke-width="1.2" stroke-linejoin="round"/></svg>
<svg style="left:1874px;top:33px;" width="12" height="12" viewBox="0 0 12 12"><path d="M3 4.5 L6 7.5 L9 4.5" fill="none" stroke="#cfcfcf" stroke-width="1.3" stroke-linecap="round" stroke-linejoin="round"/></svg>
<div style="left:1893px;top:28.5px;width:19px;height:19px;background:#545454;border-radius:4px;box-shadow:inset 0 0 0 1px #3d3d3d;"></div>
<svg style="left:1895.5px;top:31px;" width="14" height="14" viewBox="0 0 16 16"><path d="M1.8 4.2 H9.5 M1.8 4.2 V6.4 H9 M2.6 6.6 V13.6 H12.4 V9.6" fill="none" stroke="#e0e0e0" stroke-width="1.2" stroke-linejoin="round"/><path d="M5.8 9 H9.2" stroke="#e0e0e0" stroke-width="1.2"/><circle cx="12.3" cy="4.3" r="3.2" fill="#e0e0e0"/><path d="M10.6 4.3 H14 M12.3 2.6 V6" stroke="#545454" stroke-width="1.1"/></svg>
<div style="left:1610px;top:53.5px;width:18.5px;height:18px;background:#4d4d4d;border-radius:4px;box-shadow:inset 0 0 0 1px #6a6a6a;"></div>
<svg style="left:1612px;top:55.5px;" width="14" height="14" viewBox="0 0 16 16"><rect x="1.6" y="2" width="12.8" height="3.2" fill="#e6e6e6"/><path d="M2.4 6.2 H13.6 V14 H2.4 Z" fill="#e6e6e6"/><rect x="6" y="7.6" width="4" height="1.5" fill="#4d4d4d"/></svg>
<div class="t" style="top:52.5px;color:#ffffff;font-size:11.7px;left:1633px;">Scene Collection</div>
<div style="left:1588px;top:72px;width:330.6px;height:20px;background:#334d80;"></div>
<svg style="left:1613.5px;top:76px;" width="12" height="12" viewBox="0 0 12 12"><path d="M4.2 2.4 L7.8 6 L4.2 9.6" fill="none" stroke="#d0d0d0" stroke-width="1.2" stroke-linecap="round" stroke-linejoin="round"/></svg>
<div style="left:1630px;top:73px;width:18.5px;height:18px;background:#5b6f9a;border-radius:4px;box-shadow:inset 0 0 0 1px #7386ad;"></div>
<svg style="left:1631.55px;top:74.75px;" width="15.5" height="15.5" viewBox="0 0 16 16"><path d="M2.6 3 H13.4 L8 13.4 Z" fill="none" stroke="#d98f4e" stroke-width="2.7" stroke-linejoin="round"/></svg>
<div class="t" style="top:72.6px;color:#ffb340;font-size:11.7px;left:1653px;">Cube</div>
<svg style="left:1703.25px;top:74.25px;" width="15.5" height="15.5" viewBox="0 0 16 16"><path d="M10.8 1.9 A3.7 3.7 0 0 0 7.5 7 L2.1 12.4 A1.2 1.2 0 0 0 3.8 14.1 L9.2 8.7 A3.7 3.7 0 0 0 14.2 5.4 L12 7.3 L9.5 6.6 L8.8 4.1 Z" fill="none" stroke="#6c9bff" stroke-width="1.1" stroke-linejoin="round"/></svg>
<svg style="left:1723.5px;top:74.5px;" width="15" height="15" viewBox="0 0 16 16"><path d="M4.6 3.2 H11.4 M3.9 5 L7.2 11.4 M12.1 5 L8.8 11.4" fill="none" stroke="#1fd3a6" stroke-width="1.3"/><rect x="1.3" y="1.4" width="3.5" height="3.5" fill="none" stroke="#1fd3a6" stroke-width="1.25"/><rect x="11.2" y="1.4" width="3.5" height="3.5" fill="none" stroke="#1fd3a6" stroke-width="1.25"/><rect x="6.25" y="11.2" width="3.5" height="3.5" fill="none" stroke="#1fd3a6" stroke-width="1.25"/></svg>
<svg style="left:1872.5px;top:74.5px;" width="15" height="15" viewBox="0 0 16 16"><path d="M1 8 C3 4.2 5.6 3 8 3 C10.4 3 13 4.2 15 8 C13 11.8 10.4 13 8 13 C5.6 13 3 11.8 1 8 Z" fill="#e6e6e6"/><circle cx="8" cy="8" r="3.1" fill="#334d80"/><circle cx="8" cy="8" r="1.5" fill="#e6e6e6"/></svg>
<svg style="left:1892.25px;top:74.25px;" width="15.5" height="15.5" viewBox="0 0 16 16"><path d="M1.5 4.6 A0.9 0.9 0 0 1 2.4 3.7 H4.6 L5.6 2.2 H10.4 L11.4 3.7 H13.6 A0.9 0.9 0 0 1 14.5 4.6 V12.4 A0.9 0.9 0 0 1 13.6 13.3 H2.4 A0.9 0.9 0 0 1 1.5 12.4 Z" fill="#e6e6e6"/><circle cx="8" cy="8.4" r="3.6" fill="#334d80"/><circle cx="8" cy="8.4" r="2.6" fill="none" stroke="#e6e6e6" stroke-width="1"/><circle cx="8" cy="8.4" r="0.9" fill="#e6e6e6"/></svg>
<div style="left:1588px;top:314px;width:330.6px;height:718.5px;background:#303030;border-radius:5px;"></div>
<div style="left:1588px;top:340px;width:29px;height:692.5px;background:#1e1e1e;border-radius:0 0 0 5px;"></div>
<div style="left:1588px;top:314px;width:330.6px;height:718.5px;border-radius:5px;box-shadow:inset 0 0 0 1px rgba(255,255,255,0.06);"></div>
<div style="left:1597.5px;top:316.5px;width:31px;height:19px;background:#282828;border-radius:4px;box-shadow:inset 0 0 0 1px #3d3d3d;"></div>
<svg style="left:1600.75px;top:317.75px;" width="16.5" height="16.5" viewBox="0 0 16 16"><rect x="1.2" y="1.2" width="13.6" height="6" rx="3" fill="#e6e6e6"/><path d="M7.6 2.4 H11.8 A1.8 1.8 0 0 1 11.8 6 H7.6 Z" fill="#282828"/><rect x="1.2" y="8.8" width="13.6" height="6" rx="3" fill="#e6e6e6"/><path d="M10 10 H11.8 A1.8 1.8 0 0 1 11.8 13.6 H10 Z" fill="#282828"/></svg>
<svg style="left:1616px;top:321px;" width="12" height="12" viewBox="0 0 12 12"><path d="M3 4.5 L6 7.5 L9 4.5" fill="none" stroke="#cfcfcf" stroke-width="1.3" stroke-linecap="round" stroke-linejoin="round"/></svg>
<div style="left:1696.5px;top:316.5px;width:118px;height:19px;background:#1d1d1d;border-radius:4px;box-shadow:inset 0 0 0 1px #3d3d3d;"></div>
<svg style="left:1701px;top:319px;" width="14" height="14" viewBox="0 0 16 16"><circle cx="9.6" cy="6.2" r="4.4" fill="none" stroke="#d0d0d0" stroke-width="1.2"/><path d="M6.5 9.4 L1.6 14.3" stroke="#d0d0d0" stroke-width="1.3" stroke-linecap="round"/></svg>
<div class="t" style="top:316px;color:#777777;font-size:11.7px;left:1721.5px;">Search</div>
<div style="left:1892.5px;top:316.5px;width:19px;height:19px;background:#282828;border-radius:4px;box-shadow:inset 0 0 0 1px #3d3d3d;"></div>
<svg style="left:1896px;top:321px;" width="12" height="12" viewBox="0 0 12 12"><path d="M3 4.5 L6 7.5 L9 4.5" fill="none" stroke="#e0e0e0" stroke-width="1.3" stroke-linecap="round" stroke-linejoin="round"/></svg>
<div style="left:1591px;top:560.6px;width:26px;height:25.4px;background:#303030;border-radius:4px 0 0 4px;"></div>
<svg style="left:1596px;top:352.5px;" width="16" height="16" viewBox="0 0 16 16"><path d="M4.2 2 V8.4 M2.6 2 H5.8" stroke="#e0e0e0" stroke-width="1.3" fill="none"/><path d="M2.8 9 H5.6 V12.6 A1.4 1.4 0 0 1 2.8 12.6 Z" fill="#e0e0e0"/><path d="M9.2 2 V4.6 A1.8 1.8 0 0 0 10.3 6.3 V13.2 A1 1 0 0 0 12.3 13.2 V6.3 A1.8 1.8 0 0 0 13.4 4.6 V2 L12.2 2 V4.4 H10.4 V2 Z" fill="#e0e0e0"/></svg>
<div style="left:1592px;top:376.5px;width:22px;height:1px;background:#2a2a2a;"></div>
<svg style="left:1596.5px;top:389.5px;" width="15" height="15" viewBox="0 0 16 16"><path d="M2 5.2 H14 V13.6 H2 Z" fill="none" stroke="#d8d8d8" stroke-width="1.3"/><path d="M4 5 V3 H8 V5" fill="none" stroke="#d8d8d8" stroke-width="1.3"/><rect x="9.4" y="7.4" width="3" height="1.5" fill="#d8d8d8"/><rect x="9.4" y="10.2" width="3" height="1.5" fill="#d8d8d8"/><rect x="3.8" y="7.2" width="4" height="4.6" fill="#d8d8d8"/></svg>
<svg style="left:1596.5px;top:418px;" width="15" height="15" viewBox="0 0 16 16"><path d="M2 2.4 H14 V7.6 H2 Z" fill="#d8d8d8"/><path d="M4.2 8.6 H11.8 V14.2 H4.2 Z" fill="none" stroke="#d8d8d8" stroke-width="1.2"/><path d="M5.4 13 L7.4 10.2 L8.6 11.6 L9.4 10.8 L10.8 13 Z" fill="#d8d8d8"/></svg>
<svg style="left:1596.5px;top:446.5px;" width="15" height="15" viewBox="0 0 16 16"><rect x="5.2" y="1.4" width="9.4" height="9.4" rx="0.8" fill="none" stroke="#d8d8d8" stroke-width="1.1"/><path d="M6.2 9.8 L9 5.4 L10.6 7.6 L11.8 6.4 L13.8 9.8 Z" fill="#d8d8d8"/><circle cx="12.3" cy="3.8" r="0.9" fill="#d8d8d8"/><path d="M3.3 3.6 V12.7 H12.4 M1.4 5.8 V14.6 H10.2" fill="none" stroke="#d8d8d8" stroke-width="1.1" stroke-linejoin="round"/></svg>
<svg style="left:1596.5px;top:474.5px;" width="15" height="15" viewBox="0 0 16 16"><path d="M4.6 1.6 C5.6 4 7 7.4 7.6 9.6 A3.4 3.4 0 0 0 6.4 12 H1.8 A0.7 0.7 0 0 1 1.2 11 Z" fill="#d8d8d8"/><circle cx="10.3" cy="11" r="3.2" fill="none" stroke="#d8d8d8" stroke-width="1.2"/><path d="M8.6 10.4 A1.9 1.9 0 0 1 10 9.1" fill="none" stroke="#d8d8d8" stroke-width="0.9"/><circle cx="12.2" cy="3.6" r="1.7" fill="#d8d8d8"/></svg>
<svg style="left:1596px;top:502px;" width="16" height="16" viewBox="0 0 16 16"><circle cx="8" cy="8" r="5.6" fill="none" stroke="#c4505c" stroke-width="1.2"/><path d="M4 5.2 C5.6 5 6.6 6 6.2 7.2 C5.8 8.4 7.6 8.6 7.4 10 C7.2 11.4 6 11.8 5 11.2 C3.8 10.4 3 7.4 4 5.2 Z M9 3.2 C10.6 3.6 12 4.6 12.6 6 C11.6 6.6 10.2 6.2 9.6 5.2 Z" fill="#c4505c"/><path d="M2 13.2 L3.4 11.8 M12.6 4.2 L14 2.8" stroke="#c4505c" stroke-width="1.1"/></svg>
<div style="left:1592px;top:524px;width:22px;height:1px;background:#2a2a2a;"></div>
<svg style="left:1596.5px;top:538px;" width="15" height="15" viewBox="0 0 16 16"><rect x="4.2" y="4.2" width="7.6" height="7.6" fill="#d38a4b"/><path d="M1.5 4.5 V2.3 A0.8 0.8 0 0 1 2.3 1.5 H4.5 M11.5 1.5 H13.7 A0.8 0.8 0 0 1 14.5 2.3 V4.5 M14.5 11.5 V13.7 A0.8 0.8 0 0 1 13.7 14.5 H11.5 M4.5 14.5 H2.3 A0.8 0.8 0 0 1 1.5 13.7 V11.5" fill="none" stroke="#d38a4b" stroke-width="1.1" stroke-linecap="round"/></svg>
<svg style="left:1596px;top:566px;" width="16" height="16" viewBox="0 0 16 16"><path d="M10.8 1.6 A3.9 3.9 0 0 0 7.2 6.9 L1.9 12.2 A1.4 1.4 0 0 0 3.9 14.2 L9.2 8.9 A3.9 3.9 0 0 0 14.4 5.2 L12 7.2 L9.6 6.4 L8.9 4 Z" fill="#6c9bff"/></svg>
<svg style="left:1596.5px;top:594.5px;" width="15" height="15" viewBox="0 0 16 16"><circle cx="3.4" cy="3.4" r="2" fill="#6c9bff"/><circle cx="12.4" cy="4" r="1.3" fill="#6c9bff"/><circle cx="12" cy="12.6" r="1.5" fill="#6c9bff"/><circle cx="4" cy="12.4" r="1.1" fill="#6c9bff"/><path d="M3.4 3.4 L12.4 4 M3.4 3.4 L12 12.6 M3.4 3.4 L4 12.4" stroke="#6c9bff" stroke-width="1" fill="none"/></svg>
<svg style="left:1596.5px;top:622px;" width="15" height="15" viewBox="0 0 16 16"><path d="M12.6 11.6 A5.8 5.8 0 1 1 10.6 2.8" fill="none" stroke="#6c9bff" stroke-width="1.3" stroke-linecap="round"/><circle cx="7.6" cy="8" r="2.3" fill="#6c9bff"/><circle cx="12.8" cy="3.6" r="1.6" fill="#6c9bff"/></svg>
<svg style="left:1596.5px;top:650.5px;" width="15" height="15" viewBox="0 0 16 16"><path d="M2 11 C1.4 7 5 4.6 8.6 3.4 C11.6 2.4 14 2.6 14.4 4 C14.8 5.6 13.6 8.4 11 10.8 C8.4 13.2 2.6 14.4 2 11 Z" fill="none" stroke="#6c9bff" stroke-width="1.3"/><circle cx="6.6" cy="9.4" r="2.5" fill="none" stroke="#6c9bff" stroke-width="1.2"/><circle cx="6.6" cy="9.4" r="0.9" fill="#6c9bff"/></svg>
<svg style="left:1596.25px;top:678.25px;" width="15.5" height="15.5" viewBox="0 0 16 16"><path d="M4.6 3.2 H11.4 M3.9 5 L7.2 11.4 M12.1 5 L8.8 11.4" fill="none" stroke="#1fd3a6" stroke-width="1.3"/><rect x="1.3" y="1.4" width="3.5" height="3.5" fill="none" stroke="#1fd3a6" stroke-width="1.25"/><rect x="11.2" y="1.4" width="3.5" height="3.5" fill="none" stroke="#1fd3a6" stroke-width="1.25"/><rect x="6.25" y="11.2" width="3.5" height="3.5" fill="none" stroke="#1fd3a6" stroke-width="1.25"/></svg>
<svg style="left:1596.5px;top:706.5px;" width="15" height="15" viewBox="0 0 16 16"><circle cx="8" cy="8" r="6.6" fill="#c8606a"/><path d="M8 8 L8 2.6 A5.4 5.4 0 0 0 2.6 8 Z M8 8 L8 13.4 A5.4 5.4 0 0 0 13.4 8 Z" fill="#1e1e1e"/></svg>
<div style="left:1592px;top:729px;width:22px;height:1px;background:#2a2a2a;"></div>
<svg style="left:1627.5px;top:351px;" width="15" height="15" viewBox="0 0 16 16"><rect x="4.2" y="4.2" width="7.6" height="7.6" fill="#e6e6e6"/><path d="M1.5 4.5 V2.3 A0.8 0.8 0 0 1 2.3 1.5 H4.5 M11.5 1.5 H13.7 A0.8 0.8 0 0 1 14.5 2.3 V4.5 M14.5 11.5 V13.7 A0.8 0.8 0 0 1 13.7 14.5 H11.5 M4.5 14.5 H2.3 A0.8 0.8 0 0 1 1.5 13.7 V11.5" fill="none" stroke="#e6e6e6" stroke-width="1.1" stroke-linecap="round"/></svg>
<div class="t" style="top:348.5px;color:#e6e6e6;font-size:11.7px;left:1651px;">Cube</div>
<svg style="left:1692px;top:352.5px;" width="12" height="12" viewBox="0 0 12 12"><path d="M4.2 2.4 L7.8 6 L4.2 9.6" fill="none" stroke="#d0d0d0" stroke-width="1.2" stroke-linecap="round" stroke-linejoin="round"/></svg>
<svg style="left:1710px;top:351.5px;" width="14" height="14" viewBox="0 0 16 16"><circle cx="3.3" cy="3.3" r="1.6" fill="#e6e6e6"/><circle cx="8.6" cy="3.6" r="1.5" fill="#e6e6e6"/><circle cx="4.6" cy="8" r="1.9" fill="#e6e6e6"/><circle cx="10.8" cy="10.6" r="3.6" fill="#e6e6e6"/></svg>
<div class="t" style="top:348.5px;color:#e6e6e6;font-size:11.7px;left:1733px;">GeometryNodes</div>
<svg style="left:1894px;top:350.5px;" width="16" height="16" viewBox="0 0 16 16"><path d="M9.3 1.8 L14.2 6.7 L12.9 7.2 L11 9.1 L10.7 12 L4 5.3 L6.9 5 L8.8 3.1 Z" fill="none" stroke="#9a9a9a" stroke-width="1.1" stroke-linejoin="round"/><path d="M7 9 L2 14" stroke="#9a9a9a" stroke-width="1.1" stroke-linecap="round"/></svg>
<div style="left:1625px;top:384.5px;width:285.6px;height:19px;background:#545454;border-radius:4px;"></div>
<svg style="left:1631.25px;top:387.75px;" width="12.5" height="12.5" viewBox="0 0 16 16"><path d="M8 2.5 V13.5 M2.5 8 H13.5" stroke="#f0f0f0" stroke-width="1.2" fill="none"/></svg>
<div class="t" style="top:384px;color:#e6e6e6;font-size:11.7px;left:1776px;transform:translateX(-50%);">Add Modifier</div>
<div style="left:1624.8px;top:414px;width:286px;height:152px;background:#3d3d3d;border-radius:4px;"></div>
<svg style="left:1632.5px;top:421.5px;" width="12" height="12" viewBox="0 0 12 12"><path d="M1.8 3.9 L6 8.1 L10.2 3.9" fill="none" stroke="#d8d8d8" stroke-width="1.15" stroke-linecap="round" stroke-linejoin="round"/></svg>
<svg style="left:1647.75px;top:419.75px;" width="14.5" height="14.5" viewBox="0 0 16 16"><rect x="1.6" y="1.6" width="12.8" height="12.8" rx="1" fill="none" stroke="#e0e0e0" stroke-width="1.1"/><circle cx="8" cy="8" r="4.4" fill="none" stroke="#e0e0e0" stroke-width="1.2"/></svg>
<div style="left:1673.5px;top:418px;width:87px;height:18px;background:#1d1d1d;border-radius:4px 0 0 4px;"></div>
<div class="t" style="top:417px;color:#e6e6e6;font-size:11.7px;left:1681px;">Subdivision</div>
<div style="left:1760.5px;top:418px;width:19.7px;height:18px;background:#545454;"></div>
<svg style="left:1763.5px;top:420px;" width="14" height="14" viewBox="0 0 16 16"><path d="M3 3.2 H13 L8 13 Z" fill="none" stroke="#e6e6e6" stroke-width="1.2" stroke-linejoin="round"/><circle cx="3" cy="3.2" r="1.7" fill="#545454" stroke="#e6e6e6" stroke-width="1.1"/><circle cx="13" cy="3.2" r="1.7" fill="#545454" stroke="#e6e6e6" stroke-width="1.1"/><circle cx="8" cy="13" r="1.7" fill="#545454" stroke="#e6e6e6" stroke-width="1.1"/></svg>
<div style="left:1781px;top:418px;width:19.2px;height:18px;background:#4772b3;"></div>
<svg style="left:1783.35px;top:419.75px;" width="14.5" height="14.5" viewBox="0 0 16 16"><path d="M3.5 5 V11 M5 12.5 H11 M12.5 11 V5.5 M5 3.5 H9" fill="none" stroke="#ffffff" stroke-width="1.1"/><rect x="2" y="2" width="3" height="3" fill="none" stroke="#ffffff" stroke-width="1"/><rect x="2" y="11" width="3" height="3" fill="none" stroke="#ffffff" stroke-width="1"/><rect x="11" y="11" width="3" height="3" fill="none" stroke="#ffffff" stroke-width="1"/><rect x="10" y="1.5" width="4.5" height="4.5" fill="#ffffff"/></svg>
<div style="left:1801px;top:418px;width:19.2px;height:18px;background:#4772b3;"></div>
<svg style="left:1803.35px;top:419.75px;" width="14.5" height="14.5" viewBox="0 0 16 16"><rect x="1.6" y="2.6" width="12.8" height="8.4" rx="0.8" fill="none" stroke="#ffffff" stroke-width="1.2"/><rect x="3.4" y="4.4" width="9.2" height="4.8" fill="#ffffff"/><path d="M8 11 V13.4 M5 13.6 H11" stroke="#ffffff" stroke-width="1.3" stroke-linecap="round"/></svg>
<div style="left:1821px;top:418px;width:19.2px;height:18px;background:#4772b3;"></div>
<svg style="left:1823.35px;top:419.75px;" width="14.5" height="14.5" viewBox="0 0 16 16"><path d="M1.5 4.6 A0.9 0.9 0 0 1 2.4 3.7 H4.6 L5.6 2.2 H10.4 L11.4 3.7 H13.6 A0.9 0.9 0 0 1 14.5 4.6 V12.4 A0.9 0.9 0 0 1 13.6 13.3 H2.4 A0.9 0.9 0 0 1 1.5 12.4 Z" fill="#ffffff"/><circle cx="8" cy="8.4" r="3.6" fill="#4772b3"/><circle cx="8" cy="8.4" r="2.6" fill="none" stroke="#ffffff" stroke-width="1"/><circle cx="8" cy="8.4" r="0.9" fill="#ffffff"/></svg>
<div style="left:1841px;top:418px;width:19.3px;height:18px;background:#282828;border-radius:0 4px 4px 0;"></div>
<svg style="left:1844.5px;top:421.5px;" width="12" height="12" viewBox="0 0 12 12"><path d="M2.4 4.2 L6 7.8 L9.6 4.2" fill="none" stroke="#e0e0e0" stroke-width="1.4" stroke-linecap="round" stroke-linejoin="round"/></svg>
<svg style="left:1865.5px;top:421px;" width="12" height="12" viewBox="0 0 12 12"><path d="M2.2 2.2 L9.8 9.8 M9.8 2.2 L2.2 9.8" fill="none" stroke="#e0e0e0" stroke-width="1.3" stroke-linecap="round"/></svg>
<svg style="left:1891px;top:425.5px;" width="10" height="4" viewBox="0 0 10 4"><rect x="0" y="0" width="1" height="1" fill="#8a8a8a"/><rect x="0" y="3" width="1" height="1" fill="#8a8a8a"/><rect x="3" y="0" width="1" height="1" fill="#8a8a8a"/><rect x="3" y="3" width="1" height="1" fill="#8a8a8a"/><rect x="6" y="0" width="1" height="1" fill="#8a8a8a"/><rect x="6" y="3" width="1" height="1" fill="#8a8a8a"/><rect x="9" y="0" width="1" height="1" fill="#8a8a8a"/><rect x="9" y="3" width="1" height="1" fill="#8a8a8a"/></svg>
<div style="left:1633.5px;top:448px;width:133.5px;height:18px;background:#4772b3;border-radius:4px 0 0 4px;"></div>
<div style="left:1767.5px;top:448px;width:134.5px;height:18px;background:#545454;border-radius:0 4px 4px 0;"></div>
<div class="t" style="top:447px;color:#ffffff;font-size:11.7px;left:1700px;transform:translateX(-50%);">Catmull-Clark</div>
<div class="t" style="top:447px;color:#e6e6e6;font-size:11.7px;left:1835px;transform:translateX(-50%);">Simple</div>
<div class="t" style="top:472px;color:#e6e6e6;font-size:11.7px;left:1727.5px;transform:translateX(-100%);">Levels Viewport</div>
<div style="left:1738px;top:473px;width:144px;height:18px;background:#545454;border-radius:4px 4px 0 0;"></div>
<div class="t" style="top:472px;color:#e6e6e6;font-size:11.7px;left:1809.5px;transform:translateX(-50%);">4</div>
<div class="t" style="top:492px;color:#e6e6e6;font-size:11.7px;left:1727.5px;transform:translateX(-100%);">Render</div>
<div style="left:1738px;top:492px;width:144px;height:18.5px;background:#545454;border-radius:0 0 4px 4px;"></div>
<div class="t" style="top:491.5px;color:#e6e6e6;font-size:11.7px;left:1809.5px;transform:translateX(-50%);">2</div>
<div style="left:1891px;top:479.6px;width:4.4px;height:4.4px;background:#e4e4e4;border-radius:2.2px;"></div>
<div style="left:1891px;top:499.6px;width:4.4px;height:4.4px;background:#e4e4e4;border-radius:2.2px;"></div>
<div style="left:1891px;top:524.6px;width:4.4px;height:4.4px;background:#e4e4e4;border-radius:2.2px;"></div>
<div style="left:1738px;top:521px;width:12px;height:12px;background:#4772b3;border-radius:3px;"></div>
<svg style="left:1737.8px;top:520.8px;" width="12.5" height="12.5" viewBox="0 0 12.5 12.5"><path d="M2.8 6.4 L5.2 9 L9.8 3.4" fill="none" stroke="#fff" stroke-width="1.7" stroke-linecap="round" stroke-linejoin="round"/></svg>
<div class="t" style="top:517px;color:#e6e6e6;font-size:11.7px;left:1754px;">Optimal Display</div>
<svg style="left:1637.5px;top:546px;" width="12" height="12" viewBox="0 0 12 12"><path d="M3.9 1.8 L8.1 6 L3.9 10.2" fill="none" stroke="#d8d8d8" stroke-width="1.15" stroke-linecap="round" stroke-linejoin="round"/></svg>
<div class="t" style="top:542px;color:#e6e6e6;font-size:11.7px;left:1654px;">Advanced</div>
<div style="left:1624.8px;top:567.6px;width:286px;height:136.2px;background:#3d3d3d;border-radius:4px;box-shadow:inset 0 0 0 1px #4772b3;"></div>
<div style="left:1625.8px;top:650px;width:284px;height:29.5px;background:#363636;"></div>
<svg style="left:1632.5px;top:575.5px;" width="12" height="12" viewBox="0 0 12 12"><path d="M1.8 3.9 L6 8.1 L10.2 3.9" fill="none" stroke="#d8d8d8" stroke-width="1.15" stroke-linecap="round" stroke-linejoin="round"/></svg>
<svg style="left:1647.5px;top:573.5px;" width="15" height="15" viewBox="0 0 16 16"><circle cx="3.3" cy="3.3" r="1.6" fill="#c4c4c4"/><circle cx="8.6" cy="3.6" r="1.5" fill="#c4c4c4"/><circle cx="4.6" cy="8" r="1.9" fill="#c4c4c4"/><circle cx="10.8" cy="10.6" r="3.6" fill="#c4c4c4"/></svg>
<div style="left:1673.5px;top:572px;width:87px;height:18px;background:#1d1d1d;border-radius:4px 0 0 4px;"></div>
<div class="t" style="top:571px;color:#e6e6e6;font-size:11.7px;left:1681px;">GeometryN...</div>
<div style="left:1760.5px;top:572px;width:19.7px;height:18px;background:#545454;"></div>
<svg style="left:1763.5px;top:574px;" width="14" height="14" viewBox="0 0 16 16"><path d="M3 3.2 H13 L8 13 Z" fill="none" stroke="#e6e6e6" stroke-width="1.2" stroke-linejoin="round"/><circle cx="3" cy="3.2" r="1.7" fill="#545454" stroke="#e6e6e6" stroke-width="1.1"/><circle cx="13" cy="3.2" r="1.7" fill="#545454" stroke="#e6e6e6" stroke-width="1.1"/><circle cx="8" cy="13" r="1.7" fill="#545454" stroke="#e6e6e6" stroke-width="1.1"/></svg>
<div style="left:1781px;top:572px;width:19.2px;height:18px;background:#4772b3;"></div>
<svg style="left:1783.35px;top:573.75px;" width="14.5" height="14.5" viewBox="0 0 16 16"><path d="M3.5 5 V11 M5 12.5 H11 M12.5 11 V5.5 M5 3.5 H9" fill="none" stroke="#ffffff" stroke-width="1.1"/><rect x="2" y="2" width="3" height="3" fill="none" stroke="#ffffff" stroke-width="1"/><rect x="2" y="11" width="3" height="3" fill="none" stroke="#ffffff" stroke-width="1"/><rect x="11" y="11" width="3" height="3" fill="none" stroke="#ffffff" stroke-width="1"/><rect x="10" y="1.5" width="4.5" height="4.5" fill="#ffffff"/></svg>
<div style="left:1801px;top:572px;width:19.2px;height:18px;background:#4772b3;"></div>
<svg style="left:1803.35px;top:573.75px;" width="14.5" height="14.5" viewBox="0 0 16 16"><rect x="1.6" y="2.6" width="12.8" height="8.4" rx="0.8" fill="none" stroke="#ffffff" stroke-width="1.2"/><rect x="3.4" y="4.4" width="9.2" height="4.8" fill="#ffffff"/><path d="M8 11 V13.4 M5 13.6 H11" stroke="#ffffff" stroke-width="1.3" stroke-linecap="round"/></svg>
<div style="left:1821px;top:572px;width:19.2px;height:18px;background:#4772b3;"></div>
<svg style="left:1823.35px;top:573.75px;" width="14.5" height="14.5" viewBox="0 0 16 16"><path d="M1.5 4.6 A0.9 0.9 0 0 1 2.4 3.7 H4.6 L5.6 2.2 H10.4 L11.4 3.7 H13.6 A0.9 0.9 0 0 1 14.5 4.6 V12.4 A0.9 0.9 0 0 1 13.6 13.3 H2.4 A0.9 0.9 0 0 1 1.5 12.4 Z" fill="#ffffff"/><circle cx="8" cy="8.4" r="3.6" fill="#4772b3"/><circle cx="8" cy="8.4" r="2.6" fill="none" stroke="#ffffff" stroke-width="1"/><circle cx="8" cy="8.4" r="0.9" fill="#ffffff"/></svg>
<div style="left:1841px;top:572px;width:19.3px;height:18px;background:#282828;border-radius:0 4px 4px 0;"></div>
<svg style="left:1844.5px;top:575.5px;" width="12" height="12" viewBox="0 0 12 12"><path d="M2.4 4.2 L6 7.8 L9.6 4.2" fill="none" stroke="#e0e0e0" stroke-width="1.4" stroke-linecap="round" stroke-linejoin="round"/></svg>
<svg style="left:1865.5px;top:575px;" width="12" height="12" viewBox="0 0 12 12"><path d="M2.2 2.2 L9.8 9.8 M9.8 2.2 L2.2 9.8" fill="none" stroke="#e0e0e0" stroke-width="1.3" stroke-linecap="round"/></svg>
<svg style="left:1891px;top:579.5px;" width="10" height="4" viewBox="0 0 10 4"><rect x="0" y="0" width="1" height="1" fill="#8a8a8a"/><rect x="0" y="3" width="1" height="1" fill="#8a8a8a"/><rect x="3" y="0" width="1" height="1" fill="#8a8a8a"/><rect x="3" y="3" width="1" height="1" fill="#8a8a8a"/><rect x="6" y="0" width="1" height="1" fill="#8a8a8a"/><rect x="6" y="3" width="1" height="1" fill="#8a8a8a"/><rect x="9" y="0" width="1" height="1" fill="#8a8a8a"/><rect x="9" y="3" width="1" height="1" fill="#8a8a8a"/></svg>
<div style="left:1633.5px;top:602px;width:31px;height:18px;background:#282828;border-radius:4px 0 0 4px;box-shadow:inset 0 0 0 1px #3d3d3d;"></div>
<svg style="left:1637.5px;top:603.5px;" width="15" height="15" viewBox="0 0 16 16"><rect x="3" y="1.2" width="7.8" height="5.4" rx="1.5" fill="#e6e6e6"/><rect x="1.2" y="9.2" width="7.8" height="5.4" rx="1.5" fill="#e6e6e6"/><path d="M12 3.6 H13 A1.4 1.4 0 0 1 14.4 5 V11 A1.4 1.4 0 0 1 13 12.4 H10.4" fill="none" stroke="#e6e6e6" stroke-width="1.1" stroke-linecap="round"/><path d="M3 3.4 h7.8 M1.2 11.4 h7.8" stroke="#1d1d1d" stroke-width="0.7" stroke-opacity="0.7"/></svg>
<svg style="left:1652.5px;top:606px;" width="12" height="12" viewBox="0 0 12 12"><path d="M3 4.5 L6 7.5 L9 4.5" fill="none" stroke="#cfcfcf" stroke-width="1.3" stroke-linecap="round" stroke-linejoin="round"/></svg>
<div style="left:1665px;top:602px;width:177px;height:18px;background:#1d1d1d;"></div>
<div class="t" style="top:601px;color:#e6e6e6;font-size:11.11px;letter-spacing:-0.3px;left:1672px;">GEO_TEST</div>
<div style="left:1842.5px;top:602px;width:19.5px;height:18px;background:#4772b3;"></div>
<svg style="left:1843.75px;top:602.25px;" width="17.5" height="17.5" viewBox="0 0 16 16"><path d="M8 1.2 L13.6 3 V7.6 C13.6 11 11.2 13.6 8 14.9 C4.8 13.6 2.4 11 2.4 7.6 V3 Z" fill="#ffffff"/><path d="M5.1 7.8 L7.3 10.1 L11 5.6" fill="none" stroke="#4772b3" stroke-width="1.7" stroke-linecap="round" stroke-linejoin="round"/></svg>
<div style="left:1862.5px;top:602px;width:19.5px;height:18px;background:#545454;"></div>
<svg style="left:1864.75px;top:603.25px;" width="15.5" height="15.5" viewBox="0 0 16 16"><path d="M4.6 4.4 H1.4 V14.6 H11.6 V11.6" fill="none" stroke="#e6e6e6" stroke-width="1.2" stroke-linejoin="round"/><path d="M5.4 1.4 H11.4 L14.8 4.8 V10.6 H5.4 Z" fill="none" stroke="#e6e6e6" stroke-width="1.2" stroke-linejoin="round"/><path d="M11 1.4 V5.2 H14.8 Z" fill="#e6e6e6"/></svg>
<div style="left:1882.5px;top:602px;width:19.5px;height:18px;background:#545454;border-radius:0 4px 4px 0;"></div>
<svg style="left:1886.5px;top:605px;" width="12" height="12" viewBox="0 0 12 12"><path d="M2.4 2.4 L9.6 9.6 M9.6 2.4 L2.4 9.6" fill="none" stroke="#e6e6e6" stroke-width="1.3" stroke-linecap="round"/></svg>
<svg style="left:1637.5px;top:630px;" width="12" height="12" viewBox="0 0 12 12"><path d="M1.8 3.9 L6 8.1 L10.2 3.9" fill="none" stroke="#d8d8d8" stroke-width="1.15" stroke-linecap="round" stroke-linejoin="round"/></svg>
<div class="t" style="top:626px;color:#e6e6e6;font-size:11.7px;left:1654px;">Output Attributes</div>
<div class="t" style="top:655px;color:#e6e6e6;font-size:11.7px;left:1736px;transform:translateX(-100%);">Color</div>
<div style="left:1746px;top:656px;width:156px;height:18px;background:#1d1d1d;border-radius:4px;"></div>
<div class="t" style="top:655px;color:#e6e6e6;font-size:11.11px;letter-spacing:-0.3px;left:1753px;">TEST_DATA</div>
<svg style="left:1637.5px;top:684px;" width="12" height="12" viewBox="0 0 12 12"><path d="M3.9 1.8 L8.1 6 L3.9 10.2" fill="none" stroke="#d8d8d8" stroke-width="1.15" stroke-linecap="round" stroke-linejoin="round"/></svg>
<div class="t" style="top:680px;color:#e6e6e6;font-size:11.7px;left:1654px;">Manage</div>
<div style="left:1px;top:447.5px;width:871.5px;height:585px;border-radius:5px;background-color:#1d1d1d;background-image:radial-gradient(circle at 1.5px 1.5px,#3a3a3a 0,#3a3a3a 0.75px,rgba(58,58,58,0) 1.25px),radial-gradient(circle at 1px 1px,#303030 0,#303030 0.4px,rgba(48,48,48,0) 0.95px);background-size:98.85px 98.85px,19.77px 19.77px;background-position:95.8px 10.45px,17.22px 10.95px;"></div>
<svg style="left:0px;top:0px;pointer-events:none;" width="1920" height="1054" viewBox="0 0 1920 1054"><path d="M181.9 691.6 C196.28 691.6 225.03 686.9 239.4 686.9" fill="none" stroke="#101010" stroke-width="3.6" stroke-opacity="0.6"/><path d="M181.9 691.6 C196.28 691.6 225.03 686.9 239.4 686.9" fill="none" stroke="#86d9c8" stroke-width="2"/></svg>
<svg style="left:0px;top:0px;pointer-events:none;" width="1920" height="1054" viewBox="0 0 1920 1054"><path d="M393.5 686.9 C404.2 686.9 425.6 693 436.3 693" fill="none" stroke="#101010" stroke-width="3.6" stroke-opacity="0.6"/><path d="M393.5 686.9 C404.2 686.9 425.6 693 436.3 693" fill="none" stroke="#86d9c8" stroke-width="2"/></svg>
<svg style="left:0px;top:0px;pointer-events:none;" width="1920" height="1054" viewBox="0 0 1920 1054"><path d="M378.3 811 C410.2 811 404.4 714.4 436.3 714.4" fill="none" stroke="#101010" stroke-width="3.6" stroke-opacity="0.6"/><path d="M378.3 811 C410.2 811 404.4 714.4 436.3 714.4" fill="none" stroke="#c7c729" stroke-width="2"/></svg>
<div style="left:43px;top:655.6px;width:139.7px;height:73.4px;background:#161616;border-radius:5.6px;box-shadow:0 2px 8px rgba(0,0,0,0.5);"></div>
<div style="left:43.8px;top:656.4px;width:138.1px;height:71.8px;background:#303030;border-radius:5px;"></div>
<div style="left:43.8px;top:656.4px;width:138.1px;height:21.3px;background:#1f1f1f;border-radius:5px 5px 0 0;"></div>
<svg style="left:53.3px;top:660.25px;" width="12" height="12" viewBox="0 0 12 12"><path d="M2.4 4.2 L6 7.8 L9.6 4.2" fill="none" stroke="#e0e0e0" stroke-width="1.2" stroke-linecap="round" stroke-linejoin="round"/></svg>
<div class="t" style="top:656.65px;color:#e6e6e6;font-size:11.7px;left:70.3px;">Group Input</div>
<div class="t" style="top:682px;color:#e6e6e6;font-size:11.7px;left:170.6px;transform:translateX(-100%);">Geometry</div>
<svg style="left:175.9px;top:685.6px;" width="12" height="12" viewBox="0 0 12 12"><circle cx="6" cy="6" r="4.3" fill="#00d6a3" stroke="#1a1a1a" stroke-width="0.9"/></svg>
<svg style="left:175.9px;top:707.4px;" width="12" height="12" viewBox="0 0 12 12"><circle cx="6" cy="6" r="4.2" fill="#2a2a2a" stroke="#7a7a7a" stroke-width="0.9"/></svg>
<div style="left:239.4px;top:653px;width:154.6px;height:91px;background:#303030;border-radius:5px;box-shadow:0 2px 8px rgba(0,0,0,0.5);"></div>
<div style="left:239.4px;top:653px;width:154.6px;height:20.6px;background:#1d725e;border-radius:5px 5px 0 0;"></div>
<div style="left:238.4px;top:652px;width:156.6px;height:93px;border-radius:6px;border:1.4px solid #e4e4e4;"></div>
<svg style="left:248.9px;top:656.5px;" width="12" height="12" viewBox="0 0 12 12"><path d="M2.4 4.2 L6 7.8 L9.6 4.2" fill="none" stroke="#e0e0e0" stroke-width="1.2" stroke-linecap="round" stroke-linejoin="round"/></svg>
<div class="t" style="top:652.9px;color:#e6e6e6;font-size:11.7px;left:265.9px;">Set Material</div>
<div class="t" style="top:677px;color:#e6e6e6;font-size:11.7px;left:250.3px;">Geometry</div>
<div class="t" style="top:698.3px;color:#e6e6e6;font-size:11.7px;left:250.3px;">Selection</div>
<svg style="left:233.4px;top:680.9px;" width="12" height="12" viewBox="0 0 12 12"><circle cx="6" cy="6" r="4.3" fill="#00d6a3" stroke="#1a1a1a" stroke-width="0.9"/></svg>
<svg style="left:387.5px;top:680.9px;" width="12" height="12" viewBox="0 0 12 12"><circle cx="6" cy="6" r="4.3" fill="#00d6a3" stroke="#1a1a1a" stroke-width="0.9"/></svg>
<svg style="left:232.4px;top:701.4px;" width="14" height="14" viewBox="0 0 14 14"><path d="M7 2.4 L11.6 7 L7 11.6 L2.4 7 Z" fill="#cca6d6" stroke="#1a1a1a" stroke-width="0.9"/><circle cx="7" cy="7" r="1.2" fill="#1d1d1d"/></svg>
<svg style="left:233.4px;top:724.4px;" width="12" height="12" viewBox="0 0 12 12"><circle cx="6" cy="6" r="4.3" fill="#eb7582" stroke="#1a1a1a" stroke-width="0.9"/></svg>
<div style="left:249.7px;top:720.6px;width:134px;height:18.4px;background:#1d1d1d;border-radius:4px;box-shadow:inset 0 0 0 1px #3d3d3d;"></div>
<svg style="left:254.25px;top:722.75px;" width="14.5" height="14.5" viewBox="0 0 16 16"><circle cx="8" cy="8" r="6.6" fill="#e6e6e6"/><path d="M8 8 L8 2.6 A5.4 5.4 0 0 0 2.6 8 Z M8 8 L8 13.4 A5.4 5.4 0 0 0 13.4 8 Z" fill="#1d1d1d"/></svg>
<div class="t" style="top:720px;color:#e6e6e6;font-size:11.11px;letter-spacing:-0.3px;left:275px;">SHADER_TEST</div>
<svg style="left:366.3px;top:724px;" width="12" height="12" viewBox="0 0 12 12"><path d="M2.4 2.4 L9.6 9.6 M9.6 2.4 L2.4 9.6" fill="none" stroke="#d8d8d8" stroke-width="1.2" stroke-linecap="round"/></svg>
<div style="left:435.5px;top:656.6px;width:139.3px;height:94.8px;background:#161616;border-radius:5.6px;box-shadow:0 2px 8px rgba(0,0,0,0.5);"></div>
<div style="left:436.3px;top:657.4px;width:137.7px;height:93.2px;background:#303030;border-radius:5px;"></div>
<div style="left:436.3px;top:657.4px;width:137.7px;height:21.6px;background:#1f1f1f;border-radius:5px 5px 0 0;"></div>
<svg style="left:445.8px;top:661.4px;" width="12" height="12" viewBox="0 0 12 12"><path d="M2.4 4.2 L6 7.8 L9.6 4.2" fill="none" stroke="#e0e0e0" stroke-width="1.2" stroke-linecap="round" stroke-linejoin="round"/></svg>
<div class="t" style="top:657.8px;color:#e6e6e6;font-size:11.7px;left:462.8px;">Group Output</div>
<div class="t" style="top:683px;color:#e6e6e6;font-size:11.7px;left:447.2px;">Geometry</div>
<div class="t" style="top:704.3px;color:#e6e6e6;font-size:11.7px;left:447.2px;">Color</div>
<svg style="left:430.3px;top:687px;" width="12" height="12" viewBox="0 0 12 12"><circle cx="6" cy="6" r="4.3" fill="#00d6a3" stroke="#1a1a1a" stroke-width="0.9"/></svg>
<svg style="left:429.3px;top:707.4px;" width="14" height="14" viewBox="0 0 14 14"><path d="M7 2.4 L11.6 7 L7 11.6 L2.4 7 Z" fill="#c7c729" stroke="#1a1a1a" stroke-width="0.9"/><circle cx="7" cy="7" r="1.2" fill="#1d1d1d"/></svg>
<svg style="left:430.3px;top:730px;" width="12" height="12" viewBox="0 0 12 12"><circle cx="6" cy="6" r="4.2" fill="#2a2a2a" stroke="#7a7a7a" stroke-width="0.9"/></svg>
<div style="left:239.5px;top:776px;width:140px;height:151.6px;background:#161616;border-radius:5.6px;box-shadow:0 2px 8px rgba(0,0,0,0.5);"></div>
<div style="left:240.3px;top:776.8px;width:138.4px;height:150px;background:#303030;border-radius:5px;"></div>
<div style="left:240.3px;top:776.8px;width:138.4px;height:20px;background:#83314a;border-radius:5px 5px 0 0;"></div>
<svg style="left:249.8px;top:780px;" width="12" height="12" viewBox="0 0 12 12"><path d="M2.4 4.2 L6 7.8 L9.6 4.2" fill="none" stroke="#e0e0e0" stroke-width="1.2" stroke-linecap="round" stroke-linejoin="round"/></svg>
<div class="t" style="top:776.4px;color:#e6e6e6;font-size:11.7px;left:266.8px;">Color</div>
<svg style="left:372.3px;top:805px;" width="12" height="12" viewBox="0 0 12 12"><circle cx="6" cy="6" r="4.3" fill="#c7c729" stroke="#1a1a1a" stroke-width="0.9"/></svg>
<div style="left:250.1px;top:801.1px;width:99px;height:99px;border-radius:50%;background:conic-gradient(from 0deg at 50% 50%,#00b4b4 0deg,#0000b4 60deg,#b400b4 120deg,#b40000 180deg,#b4b400 240deg,#00b400 300deg,#00b4b4 360deg);"></div>
<div style="left:250.1px;top:801.1px;width:99px;height:99px;border-radius:50%;background:radial-gradient(circle closest-side,rgba(178,178,178,1) 0,rgba(178,178,178,0.5) 48%,rgba(178,178,178,0) 100%);"></div>
<div style="left:356px;top:802px;width:12.4px;height:97.5px;background:linear-gradient(#ffffff,#000000);box-shadow:0 0 0 1px #0c0c0c;"></div>
<div style="left:354.8px;top:829.6px;width:14.8px;height:8.6px;background:#b4b4b4;border-radius:1.5px;box-shadow:inset 0 0 0 1px #f4f4f4;"></div>
<svg style="left:289.1px;top:893.3px;" width="12" height="12" viewBox="0 0 12 12"><circle cx="6" cy="6" r="4.8" fill="#b01e10" stroke="#f0e0e0" stroke-width="1"/></svg>
<div style="left:250.7px;top:902.4px;width:117.6px;height:18.8px;background:#b01e10;border-radius:3px;box-shadow:inset 0 0 0 1px rgba(0,0,0,0.25);"></div>
<div style="left:1px;top:447.5px;width:871.5px;height:25.5px;background:#1d1d1d;border-radius:5px 5px 0 0;"></div>
<div style="left:8px;top:450.5px;width:32px;height:19px;background:#282828;border-radius:4px;box-shadow:inset 0 0 0 1px #3d3d3d;"></div>
<svg style="left:13px;top:453px;" width="14" height="14" viewBox="0 0 16 16"><circle cx="3.3" cy="3.3" r="1.6" fill="#e6e6e6"/><circle cx="8.6" cy="3.6" r="1.5" fill="#e6e6e6"/><circle cx="4.6" cy="8" r="1.9" fill="#e6e6e6"/><circle cx="10.8" cy="10.6" r="3.6" fill="#e6e6e6"/></svg>
<svg style="left:27.5px;top:455px;" width="12" height="12" viewBox="0 0 12 12"><path d="M3 4.5 L6 7.5 L9 4.5" fill="none" stroke="#cfcfcf" stroke-width="1.3" stroke-linecap="round" stroke-linejoin="round"/></svg>
<div style="left:45px;top:450.5px;width:79px;height:19px;background:#282828;border-radius:4px;box-shadow:inset 0 0 0 1px #3d3d3d;"></div>
<div class="t" style="top:450px;color:#e6e6e6;font-size:11.7px;left:53px;">Modifier</div>
<svg style="left:110.5px;top:455px;" width="12" height="12" viewBox="0 0 12 12"><path d="M3 4.5 L6 7.5 L9 4.5" fill="none" stroke="#cfcfcf" stroke-width="1.3" stroke-linecap="round" stroke-linejoin="round"/></svg>
<div class="t" style="top:450px;color:#e6e6e6;font-size:11.7px;left:136px;">View</div>
<div class="t" style="top:450px;color:#e6e6e6;font-size:11.7px;left:177px;">Select</div>
<div class="t" style="top:450px;color:#e6e6e6;font-size:11.7px;left:224px;">Add</div>
<div class="t" style="top:450px;color:#e6e6e6;font-size:11.7px;left:261px;">Node</div>
<div style="left:327px;top:450.5px;width:172px;height:19px;background:#282828;border-radius:4px;box-shadow:inset 0 0 0 1px #3d3d3d;"></div>
<div style="left:359px;top:451.5px;width:80px;height:17px;background:#1d1d1d;"></div>
<svg style="left:331.5px;top:452.5px;" width="15" height="15" viewBox="0 0 16 16"><rect x="3" y="1.2" width="7.8" height="5.4" rx="1.5" fill="#e6e6e6"/><rect x="1.2" y="9.2" width="7.8" height="5.4" rx="1.5" fill="#e6e6e6"/><path d="M12 3.6 H13 A1.4 1.4 0 0 1 14.4 5 V11 A1.4 1.4 0 0 1 13 12.4 H10.4" fill="none" stroke="#e6e6e6" stroke-width="1.1" stroke-linecap="round"/><path d="M3 3.4 h7.8 M1.2 11.4 h7.8" stroke="#1d1d1d" stroke-width="0.7" stroke-opacity="0.7"/></svg>
<svg style="left:346px;top:455px;" width="12" height="12" viewBox="0 0 12 12"><path d="M3 4.5 L6 7.5 L9 4.5" fill="none" stroke="#cfcfcf" stroke-width="1.3" stroke-linecap="round" stroke-linejoin="round"/></svg>
<div class="t" style="top:450px;color:#e6e6e6;font-size:11.11px;letter-spacing:-0.3px;left:366px;">GEO_TEST</div>
<div style="left:439px;top:450.5px;width:20px;height:19px;background:#4772b3;"></div>
<svg style="left:440.25px;top:451.25px;" width="17.5" height="17.5" viewBox="0 0 16 16"><path d="M8 1.2 L13.6 3 V7.6 C13.6 11 11.2 13.6 8 14.9 C4.8 13.6 2.4 11 2.4 7.6 V3 Z" fill="#ffffff"/><path d="M5.1 7.8 L7.3 10.1 L11 5.6" fill="none" stroke="#4772b3" stroke-width="1.7" stroke-linecap="round" stroke-linejoin="round"/></svg>
<div style="left:459.5px;top:450.5px;width:19.5px;height:19px;background:#545454;"></div>
<svg style="left:461.55px;top:452.25px;" width="15.5" height="15.5" viewBox="0 0 16 16"><path d="M4.6 4.4 H1.4 V14.6 H11.6 V11.6" fill="none" stroke="#e6e6e6" stroke-width="1.2" stroke-linejoin="round"/><path d="M5.4 1.4 H11.4 L14.8 4.8 V10.6 H5.4 Z" fill="none" stroke="#e6e6e6" stroke-width="1.2" stroke-linejoin="round"/><path d="M11 1.4 V5.2 H14.8 Z" fill="#e6e6e6"/></svg>
<div style="left:479.5px;top:450.5px;width:19.5px;height:19px;background:#545454;border-radius:0 4px 4px 0;"></div>
<svg style="left:483.3px;top:454px;" width="12" height="12" viewBox="0 0 12 12"><path d="M2.4 2.4 L9.6 9.6 M9.6 2.4 L2.4 9.6" fill="none" stroke="#e6e6e6" stroke-width="1.3" stroke-linecap="round"/></svg>
<svg style="left:505.5px;top:451.5px;" width="17" height="17" viewBox="0 0 16 16"><path d="M9.3 1.8 L14.2 6.7 L12.9 7.2 L11 9.1 L10.7 12 L4 5.3 L6.9 5 L8.8 3.1 Z" fill="none" stroke="#b4b4b4" stroke-width="1.1" stroke-linejoin="round"/><path d="M7 9 L2 14" stroke="#b4b4b4" stroke-width="1.1" stroke-linecap="round"/></svg>
<div style="left:801px;top:450.5px;width:18.5px;height:19px;background:#585858;border-radius:4px;"></div>
<svg style="left:801.55px;top:451.25px;" width="17.5" height="17.5" viewBox="0 0 16 16"><path d="M3.5 2.6 H6.3 V8.8 A1.7 1.7 0 0 0 9.7 8.8 V2.6 H12.5 V8.8 A4.5 4.5 0 0 1 3.5 8.8 Z" fill="none" stroke="#b0b0b0" stroke-width="1.1" stroke-linejoin="round" transform="rotate(225 8 8) translate(0 -0.6)"/></svg>
<div style="left:826px;top:450.5px;width:39px;height:19px;background:#282828;border-radius:4px;box-shadow:inset 0 0 0 1px #3d3d3d;"></div>
<div style="left:826px;top:450.5px;width:18.5px;height:19px;background:#4772b3;border-radius:4px 0 0 4px;"></div>
<svg style="left:827.8px;top:452.5px;" width="15" height="15" viewBox="0 0 16 16"><circle cx="6.2" cy="9.6" r="4.6" fill="none" stroke="#ffffff" stroke-width="1.2"/><circle cx="9.8" cy="6.2" r="4.8" fill="#ffffff"/><path d="M5.4 8.8 A4.6 4.6 0 0 0 10.6 10.8 A4.8 4.8 0 0 1 5.4 8.8" fill="#4772b3"/></svg>
<svg style="left:848.8px;top:455px;" width="12" height="12" viewBox="0 0 12 12"><path d="M3 4.5 L6 7.5 L9 4.5" fill="none" stroke="#cfcfcf" stroke-width="1.3" stroke-linecap="round" stroke-linejoin="round"/></svg>
<svg style="left:18.5px;top:487.5px;" width="15" height="15" viewBox="0 0 16 16"><rect x="4.2" y="4.2" width="7.6" height="7.6" fill="#e6e6e6"/><path d="M1.5 4.5 V2.3 A0.8 0.8 0 0 1 2.3 1.5 H4.5 M11.5 1.5 H13.7 A0.8 0.8 0 0 1 14.5 2.3 V4.5 M14.5 11.5 V13.7 A0.8 0.8 0 0 1 13.7 14.5 H11.5 M4.5 14.5 H2.3 A0.8 0.8 0 0 1 1.5 13.7 V11.5" fill="none" stroke="#e6e6e6" stroke-width="1.1" stroke-linecap="round"/></svg>
<div class="t" style="top:485px;color:#e6e6e6;font-size:11.7px;left:42px;">Cube</div>
<svg style="left:84px;top:489px;" width="12" height="12" viewBox="0 0 12 12"><path d="M4.2 2.4 L7.8 6 L4.2 9.6" fill="none" stroke="#d0d0d0" stroke-width="1.2" stroke-linecap="round" stroke-linejoin="round"/></svg>
<svg style="left:102px;top:488px;" width="14" height="14" viewBox="0 0 16 16"><circle cx="3.3" cy="3.3" r="1.6" fill="#e6e6e6"/><circle cx="8.6" cy="3.6" r="1.5" fill="#e6e6e6"/><circle cx="4.6" cy="8" r="1.9" fill="#e6e6e6"/><circle cx="10.8" cy="10.6" r="3.6" fill="#e6e6e6"/></svg>
<div class="t" style="top:485px;color:#e6e6e6;font-size:11.7px;left:125px;">GeometryNodes</div>
<svg style="left:224px;top:489px;" width="12" height="12" viewBox="0 0 12 12"><path d="M4.2 2.4 L7.8 6 L4.2 9.6" fill="none" stroke="#d0d0d0" stroke-width="1.2" stroke-linecap="round" stroke-linejoin="round"/></svg>
<svg style="left:241.5px;top:487.5px;" width="15" height="15" viewBox="0 0 16 16"><rect x="3" y="1.2" width="7.8" height="5.4" rx="1.5" fill="#e6e6e6"/><rect x="1.2" y="9.2" width="7.8" height="5.4" rx="1.5" fill="#e6e6e6"/><path d="M12 3.6 H13 A1.4 1.4 0 0 1 14.4 5 V11 A1.4 1.4 0 0 1 13 12.4 H10.4" fill="none" stroke="#e6e6e6" stroke-width="1.1" stroke-linecap="round"/><path d="M3 3.4 h7.8 M1.2 11.4 h7.8" stroke="#1d1d1d" stroke-width="0.7" stroke-opacity="0.7"/></svg>
<div class="t" style="top:485px;color:#e6e6e6;font-size:11.11px;letter-spacing:-0.3px;left:265px;">GEO_TEST</div>
<div style="left:1px;top:494px;width:8px;height:18px;background:#262626;border-radius:0 4px 4px 0;"></div>
<svg style="left:-1.5px;top:497px;" width="12" height="12" viewBox="0 0 12 12"><path d="M4.5 3 L7.5 6 L4.5 9" fill="none" stroke="#bdbdbd" stroke-width="1" stroke-linecap="round" stroke-linejoin="round"/></svg>
<div style="left:9px;top:1027px;width:590px;height:3px;background:#383838;border-radius:1.5px;"></div>
<div style="left:851.5px;top:472px;width:20.5px;height:560px;background:#1a1a1a;border-radius:0 0 5px 0;"></div>
<div style="left:847.5px;top:475.5px;width:2.5px;height:510px;background:#333333;border-radius:1.2px;"></div>
<div style="left:852px;top:478.5px;width:17px;height:48px;background:#303030;border-radius:0 4px 4px 0;box-shadow:inset 0 0 0 1px #3a3a3a;"></div>
<div class="t" style="left:860.3px;top:502.5px;color:#ffffff;font-size:12px;transform:translate(-50%,-50%) rotate(90deg);">Group</div>
<div style="left:852px;top:531px;width:17px;height:43px;border-radius:0 4px 4px 0;border:1px solid #2f2f2f;border-left:none;"></div>
<div class="t" style="left:860.3px;top:552.5px;color:#cfcfcf;font-size:12px;transform:translate(-50%,-50%) rotate(90deg);">Node</div>
<div style="left:852px;top:579px;width:17px;height:39px;border-radius:0 4px 4px 0;border:1px solid #2f2f2f;border-left:none;"></div>
<div class="t" style="left:860.3px;top:598.5px;color:#cfcfcf;font-size:12px;transform:translate(-50%,-50%) rotate(90deg);">Tool</div>
<div style="left:852px;top:623px;width:17px;height:41.5px;border-radius:0 4px 4px 0;border:1px solid #2f2f2f;border-left:none;"></div>
<div class="t" style="left:860.3px;top:643.75px;color:#cfcfcf;font-size:12px;transform:translate(-50%,-50%) rotate(90deg);">View</div>
<div style="left:852px;top:670px;width:17px;height:93px;border-radius:0 4px 4px 0;border:1px solid #2f2f2f;border-left:none;"></div>
<div class="t" style="left:860.3px;top:716.5px;color:#cfcfcf;font-size:12px;transform:translate(-50%,-50%) rotate(90deg);">Node Wrangler</div>
<div style="left:601px;top:475px;width:244px;height:209.5px;background:#3d3d3d;border-radius:4px;"></div>
<div style="left:601px;top:632px;width:244px;height:52.5px;background:#363636;border-radius:0 0 4px 4px;"></div>
<svg style="left:607.5px;top:482.5px;" width="12" height="12" viewBox="0 0 12 12"><path d="M2.4 4.2 L6 7.8 L9.6 4.2" fill="none" stroke="#d0d0d0" stroke-width="1.2" stroke-linecap="round" stroke-linejoin="round"/></svg>
<div class="t" style="top:478px;color:#e6e6e6;font-size:11.7px;left:622.8px;">Group</div>
<svg style="left:825.5px;top:486.5px;" width="10" height="4" viewBox="0 0 10 4"><rect x="0" y="0" width="1" height="1" fill="#8a8a8a"/><rect x="0" y="3" width="1" height="1" fill="#8a8a8a"/><rect x="3" y="0" width="1" height="1" fill="#8a8a8a"/><rect x="3" y="3" width="1" height="1" fill="#8a8a8a"/><rect x="6" y="0" width="1" height="1" fill="#8a8a8a"/><rect x="6" y="3" width="1" height="1" fill="#8a8a8a"/><rect x="9" y="0" width="1" height="1" fill="#8a8a8a"/><rect x="9" y="3" width="1" height="1" fill="#8a8a8a"/></svg>
<div class="t" style="top:508px;color:#e6e6e6;font-size:11.7px;left:695.5px;transform:translateX(-100%);">Name</div>
<div style="left:705.7px;top:508.8px;width:130.7px;height:18.4px;background:#1d1d1d;border-radius:4px;"></div>
<div class="t" style="top:508px;color:#e6e6e6;font-size:11.11px;letter-spacing:-0.3px;left:713px;">GEO_TEST</div>
<div class="t" style="top:533px;color:#e6e6e6;font-size:11.7px;left:695.5px;transform:translateX(-100%);">Description</div>
<div style="left:705.7px;top:533.8px;width:130.7px;height:18.4px;background:#1d1d1d;border-radius:4px;"></div>
<div class="t" style="top:558px;color:#e6e6e6;font-size:11.7px;left:695.5px;transform:translateX(-100%);">Color Tag</div>
<div style="left:705.4px;top:558.6px;width:131.2px;height:18.8px;background:#282828;border-radius:4px;box-shadow:inset 0 0 0 1px #3d3d3d;"></div>
<div class="t" style="top:558px;color:#e6e6e6;font-size:11.7px;left:713px;">Color</div>
<svg style="left:823.5px;top:563px;" width="12" height="12" viewBox="0 0 12 12"><path d="M3 4.5 L6 7.5 L9 4.5" fill="none" stroke="#e0e0e0" stroke-width="1.3" stroke-linecap="round" stroke-linejoin="round"/></svg>
<div class="t" style="top:583px;color:#e6e6e6;font-size:11.7px;left:695.5px;transform:translateX(-100%);">Node Width</div>
<div style="left:706px;top:584px;width:110.5px;height:18px;background:#545454;border-radius:4px 0 0 4px;"></div>
<div class="t" style="top:583px;color:#e6e6e6;font-size:11.7px;left:760.5px;transform:translateX(-50%);">140</div>
<div style="left:817px;top:584px;width:19px;height:18px;background:#4a4a4a;border-radius:0 4px 4px 0;"></div>
<svg style="left:820px;top:586.5px;" width="13" height="13" viewBox="0 0 16 16"><rect x="2" y="2.6" width="10" height="10.8" rx="1.8" fill="none" stroke="#5e5e5e" stroke-width="1.1"/><circle cx="12.6" cy="8" r="1.8" fill="#5e5e5e"/></svg>
<svg style="left:613.5px;top:612.5px;" width="12" height="12" viewBox="0 0 12 12"><path d="M2.4 4.2 L6 7.8 L9.6 4.2" fill="none" stroke="#d0d0d0" stroke-width="1.2" stroke-linecap="round" stroke-linejoin="round"/></svg>
<div class="t" style="top:608px;color:#e6e6e6;font-size:11.7px;left:630px;">Usage</div>
<div style="left:706px;top:640.75px;width:12.5px;height:12.5px;background:#4772b3;border-radius:3px;"></div>
<svg style="left:706px;top:640.75px;" width="12.5" height="12.5" viewBox="0 0 12.5 12.5"><path d="M2.8 6.4 L5.2 9 L9.8 3.4" fill="none" stroke="#fff" stroke-width="1.7" stroke-linecap="round" stroke-linejoin="round"/></svg>
<div class="t" style="top:637px;color:#e6e6e6;font-size:11.7px;left:722px;">Modifier</div>
<div style="left:706px;top:660.75px;width:12.5px;height:12.5px;background:#545454;border-radius:3px;box-shadow:inset 0 0 0 1px #4a4a4a;"></div>
<div class="t" style="top:657px;color:#e6e6e6;font-size:11.7px;left:722px;">Tool</div>
<div style="left:601px;top:687.2px;width:244px;height:320.3px;background:#3d3d3d;border-radius:4px;"></div>
<svg style="left:607.5px;top:694.5px;" width="12" height="12" viewBox="0 0 12 12"><path d="M2.4 4.2 L6 7.8 L9.6 4.2" fill="none" stroke="#d0d0d0" stroke-width="1.2" stroke-linecap="round" stroke-linejoin="round"/></svg>
<div class="t" style="top:690px;color:#e6e6e6;font-size:11.7px;left:622.8px;">Group Sockets</div>
<svg style="left:825.5px;top:698.5px;" width="10" height="4" viewBox="0 0 10 4"><rect x="0" y="0" width="1" height="1" fill="#8a8a8a"/><rect x="0" y="3" width="1" height="1" fill="#8a8a8a"/><rect x="3" y="0" width="1" height="1" fill="#8a8a8a"/><rect x="3" y="3" width="1" height="1" fill="#8a8a8a"/><rect x="6" y="0" width="1" height="1" fill="#8a8a8a"/><rect x="6" y="3" width="1" height="1" fill="#8a8a8a"/><rect x="9" y="0" width="1" height="1" fill="#8a8a8a"/><rect x="9" y="3" width="1" height="1" fill="#8a8a8a"/></svg>
<div style="left:610px;top:721px;width:198px;height:128px;background:#2b2b2b;border-radius:4px;box-shadow:inset 0 0 0 1px #333333;"></div>
<div class="t" style="top:726px;color:#e6e6e6;font-size:11.7px;left:654px;">Geometry</div>
<svg style="left:782.8px;top:730px;" width="12" height="12" viewBox="0 0 12 12"><circle cx="6" cy="6" r="4.8" fill="#00d6a3" stroke="#1a1a1a" stroke-width="0.9"/></svg>
<div style="left:615px;top:749px;width:188px;height:18px;background:#4772b3;border-radius:3px;"></div>
<div class="t" style="top:748px;color:#ffffff;font-size:11.7px;left:654px;">Color</div>
<svg style="left:782.8px;top:752px;" width="12" height="12" viewBox="0 0 12 12"><circle cx="6" cy="6" r="4.8" fill="#c7c729" stroke="#1a1a1a" stroke-width="0.9"/></svg>
<svg style="left:636.7px;top:774.3px;" width="12" height="12" viewBox="0 0 12 12"><circle cx="6" cy="6" r="4.8" fill="#00d6a3" stroke="#1a1a1a" stroke-width="0.9"/></svg>
<div class="t" style="top:770.2px;color:#e6e6e6;font-size:11.7px;left:654px;">Geometry</div>
<svg style="left:704px;top:838px;" width="10" height="4" viewBox="0 0 10 4"><rect x="0" y="0" width="1" height="1" fill="#b0b0b0"/><rect x="0" y="3" width="1" height="1" fill="#b0b0b0"/><rect x="3" y="0" width="1" height="1" fill="#b0b0b0"/><rect x="3" y="3" width="1" height="1" fill="#b0b0b0"/><rect x="6" y="0" width="1" height="1" fill="#b0b0b0"/><rect x="6" y="3" width="1" height="1" fill="#b0b0b0"/><rect x="9" y="0" width="1" height="1" fill="#b0b0b0"/><rect x="9" y="3" width="1" height="1" fill="#b0b0b0"/></svg>
<div style="left:818px;top:721.5px;width:18px;height:18.5px;background:#282828;border-radius:4px 4px 0 0;box-shadow:inset 0 0 0 1px #3d3d3d;"></div>
<svg style="left:821.5px;top:725px;" width="11" height="11" viewBox="0 0 16 16"><path d="M8 2.5 V13.5 M2.5 8 H13.5" stroke="#e6e6e6" stroke-width="1.2" fill="none"/></svg>
<div style="left:818px;top:740.5px;width:18px;height:18px;background:#545454;border-radius:0 0 4px 4px;"></div>
<svg style="left:821.5px;top:744px;" width="11" height="11" viewBox="0 0 16 16"><path d="M2.5 8 H13.5" stroke="#e6e6e6" stroke-width="1.2" fill="none"/></svg>
<div style="left:818px;top:767.5px;width:18px;height:18px;background:#282828;border-radius:4px;box-shadow:inset 0 0 0 1px #3d3d3d;"></div>
<svg style="left:821px;top:771px;" width="12" height="12" viewBox="0 0 12 12"><path d="M2.4 4.2 L6 7.8 L9.6 4.2" fill="none" stroke="#e0e0e0" stroke-width="1.3" stroke-linecap="round" stroke-linejoin="round"/></svg>
<div class="t" style="top:855px;color:#e6e6e6;font-size:11.7px;left:695.5px;transform:translateX(-100%);">Type</div>
<div style="left:705.4px;top:855.6px;width:131.2px;height:18.8px;background:#282828;border-radius:4px;box-shadow:inset 0 0 0 1px #3d3d3d;"></div>
<svg style="left:711px;top:859px;" width="12" height="12" viewBox="0 0 12 12"><circle cx="6" cy="6" r="4.5" fill="#c7c729" stroke="#1a1a1a" stroke-width="0.9"/></svg>
<div class="t" style="top:855px;color:#e6e6e6;font-size:11.7px;left:731px;">Color</div>
<svg style="left:823.5px;top:860px;" width="12" height="12" viewBox="0 0 12 12"><path d="M3 4.5 L6 7.5 L9 4.5" fill="none" stroke="#e0e0e0" stroke-width="1.3" stroke-linecap="round" stroke-linejoin="round"/></svg>
<div class="t" style="top:880px;color:#e6e6e6;font-size:11.7px;left:695.5px;transform:translateX(-100%);">Description</div>
<div style="left:705.7px;top:880.8px;width:130.7px;height:18.4px;background:#1d1d1d;border-radius:4px;"></div>
<div class="t" style="top:905px;color:#e6e6e6;font-size:11.7px;left:695.5px;transform:translateX(-100%);">Attribute Dom...</div>
<div style="left:705.4px;top:905.6px;width:131.2px;height:18.8px;background:#282828;border-radius:4px;box-shadow:inset 0 0 0 1px #3d3d3d;"></div>
<div class="t" style="top:905px;color:#e6e6e6;font-size:11.7px;left:713px;">Point</div>
<svg style="left:823.5px;top:910px;" width="12" height="12" viewBox="0 0 12 12"><path d="M3 4.5 L6 7.5 L9 4.5" fill="none" stroke="#e0e0e0" stroke-width="1.3" stroke-linecap="round" stroke-linejoin="round"/></svg>
<div class="t" style="top:930px;color:#e6e6e6;font-size:11.7px;left:695.5px;transform:translateX(-100%);">Default Attrib...</div>
<div style="left:705.7px;top:930.8px;width:130.7px;height:18.4px;background:#1d1d1d;border-radius:4px;"></div>
<div class="t" style="top:930px;color:#e6e6e6;font-size:11.11px;letter-spacing:-0.3px;left:713px;">TEST_DATA</div>
<div class="t" style="top:955px;color:#e6e6e6;font-size:11.7px;left:695.5px;transform:translateX(-100%);">Default</div>
<div style="left:706px;top:956px;width:130px;height:18px;background:#e7e7e7;border-radius:4px;"></div>
<div style="left:706px;top:983.75px;width:12.5px;height:12.5px;background:#545454;border-radius:3px;box-shadow:inset 0 0 0 1px #4a4a4a;"></div>
<div class="t" style="top:980px;color:#e6e6e6;font-size:11.7px;left:722px;">Hide Value</div>
<div style="left:601px;top:1010.5px;width:244px;height:22px;background:#3d3d3d;border-radius:4px 4px 0 0;"></div>
<svg style="left:607.5px;top:1017.5px;" width="12" height="12" viewBox="0 0 12 12"><path d="M2.4 4.2 L6 7.8 L9.6 4.2" fill="none" stroke="#d0d0d0" stroke-width="1.2" stroke-linecap="round" stroke-linejoin="round"/></svg>
<div class="t" style="top:1013px;color:#e6e6e6;font-size:11.7px;left:622.8px;">Animation</div>
<svg style="left:825.5px;top:1021.5px;" width="10" height="4" viewBox="0 0 10 4"><rect x="0" y="0" width="1" height="1" fill="#8a8a8a"/><rect x="0" y="3" width="1" height="1" fill="#8a8a8a"/><rect x="3" y="0" width="1" height="1" fill="#8a8a8a"/><rect x="3" y="3" width="1" height="1" fill="#8a8a8a"/><rect x="6" y="0" width="1" height="1" fill="#8a8a8a"/><rect x="6" y="3" width="1" height="1" fill="#8a8a8a"/><rect x="9" y="0" width="1" height="1" fill="#8a8a8a"/><rect x="9" y="3" width="1" height="1" fill="#8a8a8a"/></svg>
<div style="left:1px;top:447.5px;width:871.5px;height:585px;border-radius:5px;box-shadow:inset 0 0 0 1px rgba(255,255,255,0.07);"></div>
<div class="clip" style="left:876.5px;top:447.5px;width:708px;height:585px;border-radius:5px;">
</div>
<div style="left:876.5px;top:447.5px;width:708px;height:585px;border-radius:5px;background-color:#1d1d1d;background-image:radial-gradient(circle at 1.5px 1.5px,#3a3a3a 0,#3a3a3a 0.75px,rgba(58,58,58,0) 1.25px),radial-gradient(circle at 1px 1px,#303030 0,#303030 0.4px,rgba(48,48,48,0) 0.95px);background-size:91.4px 91.4px,18.28px 18.28px;background-position:40px 16.3px,3.94px 16.8px;"></div>
<svg style="left:0px;top:0px;pointer-events:none;" width="1920" height="1054" viewBox="0 0 1920 1054"><path d="M1048 644.6 C1082.5 644.6 1082.5 658.2 1117 658.2" fill="none" stroke="#101010" stroke-width="3.4" stroke-opacity="0.6"/><path d="M1048 644.6 C1082.5 644.6 1082.5 658.2 1117 658.2" fill="none" stroke="#c7c729" stroke-width="1.8"/></svg>
<svg style="left:0px;top:0px;pointer-events:none;" width="1920" height="1054" viewBox="0 0 1920 1054"><path d="M1336 638.5 C1366.2 638.5 1366.2 661.2 1396.4 661.2" fill="none" stroke="#101010" stroke-width="3.4" stroke-opacity="0.6"/><path d="M1336 638.5 C1366.2 638.5 1366.2 661.2 1396.4 661.2" fill="none" stroke="#a6e6b4" stroke-width="1.8"/></svg>
<div style="left:919.6px;top:612.3px;width:129.4px;height:93.3px;background:#161616;border-radius:5.6px;box-shadow:0 2px 8px rgba(0,0,0,0.5);"></div>
<div style="left:920.4px;top:613.1px;width:127.8px;height:91.7px;background:#303030;border-radius:5px;"></div>
<div style="left:920.4px;top:613.1px;width:127.8px;height:18.2px;background:#83314a;border-radius:5px 5px 0 0;"></div>
<svg style="left:928.74px;top:615.4px;" width="12" height="12" viewBox="0 0 12 12"><path d="M2.67 4.33 L6 7.67 L9.33 4.33" fill="none" stroke="#e0e0e0" stroke-width="1.2" stroke-linecap="round" stroke-linejoin="round"/></svg>
<div class="t" style="top:611.3px;color:#e6e6e6;font-size:10.8px;letter-spacing:-0.2px;left:944.91px;">Color Attribute</div>
<div class="t" style="top:634.4px;color:#e6e6e6;font-size:10.8px;letter-spacing:-0.2px;left:1037.4px;transform:translateX(-100%);">Color</div>
<div class="t" style="top:654.3px;color:#e6e6e6;font-size:10.8px;letter-spacing:-0.2px;left:1037.4px;transform:translateX(-100%);">Alpha</div>
<svg style="left:1042px;top:638.6px;" width="12" height="12" viewBox="0 0 12 12"><circle cx="6" cy="6" r="4.2" fill="#c7c729" stroke="#1a1a1a" stroke-width="0.9"/></svg>
<svg style="left:1042px;top:658.7px;" width="12" height="12" viewBox="0 0 12 12"><circle cx="6" cy="6" r="4.2" fill="#a1a1a1" stroke="#1a1a1a" stroke-width="0.9"/></svg>
<div style="left:929.5px;top:681.5px;width:109px;height:16.9px;background:#1d1d1d;border-radius:3.5px;box-shadow:inset 0 0 0 1px #3d3d3d;"></div>
<svg style="left:932.6px;top:683.3px;" width="14" height="14" viewBox="0 0 16 16"><rect x="1.2" y="1.2" width="3.4" height="3.4" fill="none" stroke="#e6e6e6" stroke-width="1"/><rect x="0.8" y="5.8" width="3.9" height="8.6" rx="1.5" fill="#e6e6e6"/><circle cx="2.75" cy="12.2" r="0.8" fill="#1d1d1d"/><path d="M6 5.8 L9.4 8.3 L6 10.8 Z M6 14.2 L9 11.2 V14.2 Z" fill="#e6e6e6" fill-opacity="0.85"/><rect x="9.8" y="1.6" width="3.4" height="3.4" fill="none" stroke="#e6e6e6" stroke-width="1" stroke-opacity="0.85"/><rect x="10.8" y="10.2" width="3.4" height="3.4" fill="none" stroke="#e6e6e6" stroke-width="1" stroke-opacity="0.85"/></svg>
<div class="t" style="top:680px;color:#e6e6e6;font-size:10.48px;letter-spacing:-0.07px;left:953.3px;">TEST_DATA</div>
<svg style="left:1022px;top:684px;" width="12" height="12" viewBox="0 0 12 12"><path d="M2.7 2.7 L9.3 9.3 M9.3 2.7 L2.7 9.3" fill="none" stroke="#d8d8d8" stroke-width="1.1" stroke-linecap="round"/></svg>
<div style="left:1116px;top:606.8px;width:221px;height:311.9px;background:#161616;border-radius:5.6px;box-shadow:0 2px 8px rgba(0,0,0,0.5);"></div>
<div style="left:1116.8px;top:607.6px;width:219.4px;height:310.3px;background:#303030;border-radius:5px;"></div>
<div style="left:1116.8px;top:607.6px;width:219.4px;height:18.6px;background:#1d6b2a;border-radius:5px 5px 0 0;"></div>
<svg style="left:1125.14px;top:610.1px;" width="12" height="12" viewBox="0 0 12 12"><path d="M2.67 4.33 L6 7.67 L9.33 4.33" fill="none" stroke="#e0e0e0" stroke-width="1.2" stroke-linecap="round" stroke-linejoin="round"/></svg>
<div class="t" style="top:606px;color:#e6e6e6;font-size:10.8px;letter-spacing:-0.2px;left:1141.31px;">Principled BSDF</div>
<div class="t" style="top:628px;color:#e6e6e6;font-size:10.26px;letter-spacing:-0.5px;left:1325.1px;transform:translateX(-100%);">BSDF</div>
<svg style="left:1330px;top:632.5px;" width="12" height="12" viewBox="0 0 12 12"><circle cx="6" cy="6" r="4.2" fill="#63c763" stroke="#1a1a1a" stroke-width="0.9"/></svg>
<svg style="left:1111px;top:652.2px;" width="12" height="12" viewBox="0 0 12 12"><circle cx="6" cy="6" r="4.2" fill="#c7c729" stroke="#1a1a1a" stroke-width="0.9"/></svg>
<div class="t" style="top:648px;color:#e6e6e6;font-size:10.8px;letter-spacing:-0.2px;left:1127.2px;">Base Color</div>
<div style="left:1126.8px;top:670.5px;width:199.5px;height:15.8px;background:#545454;border-radius:3px;"></div>
<div class="t" style="top:668.6px;color:#e6e6e6;font-size:10.8px;letter-spacing:-0.2px;left:1139.8px;">Metallic</div>
<div class="t" style="top:668.6px;color:#e6e6e6;font-size:10.8px;letter-spacing:-0.2px;left:1313.3px;transform:translateX(-100%);">0.000</div>
<svg style="left:1111px;top:672.4px;" width="12" height="12" viewBox="0 0 12 12"><circle cx="6" cy="6" r="4.2" fill="#a1a1a1" stroke="#1a1a1a" stroke-width="0.9"/></svg>
<div style="left:1126.8px;top:690.5px;width:199.5px;height:15.8px;background:#545454;border-radius:3px;"></div>
<div style="left:1126.8px;top:690.5px;width:97.89px;height:15.8px;background:#4772b3;border-radius:3px 0 0 3px;"></div>
<div class="t" style="top:688.6px;color:#ffffff;font-size:10.8px;letter-spacing:-0.2px;left:1139.8px;">Roughness</div>
<div class="t" style="top:688.6px;color:#ffffff;font-size:10.8px;letter-spacing:-0.2px;left:1313.3px;transform:translateX(-100%);">0.500</div>
<svg style="left:1111px;top:692.4px;" width="12" height="12" viewBox="0 0 12 12"><circle cx="6" cy="6" r="4.2" fill="#a1a1a1" stroke="#1a1a1a" stroke-width="0.9"/></svg>
<div style="left:1126.8px;top:710.5px;width:199.5px;height:15.8px;background:#545454;border-radius:3px;"></div>
<div class="t" style="top:708.6px;color:#e6e6e6;font-size:10.26px;letter-spacing:-0.5px;left:1139.8px;">IOR</div>
<div class="t" style="top:708.6px;color:#e6e6e6;font-size:10.8px;letter-spacing:-0.2px;left:1313.3px;transform:translateX(-100%);">1.500</div>
<svg style="left:1111px;top:712.4px;" width="12" height="12" viewBox="0 0 12 12"><circle cx="6" cy="6" r="4.2" fill="#a1a1a1" stroke="#1a1a1a" stroke-width="0.9"/></svg>
<div style="left:1126.8px;top:730.5px;width:199.5px;height:15.8px;background:#545454;border-radius:3px;"></div>
<div style="left:1126.8px;top:730.5px;width:199.5px;height:15.8px;background:#4772b3;border-radius:3px;"></div>
<div class="t" style="top:728.6px;color:#ffffff;font-size:10.8px;letter-spacing:-0.2px;left:1139.8px;">Alpha</div>
<div class="t" style="top:728.6px;color:#ffffff;font-size:10.8px;letter-spacing:-0.2px;left:1313.3px;transform:translateX(-100%);">1.000</div>
<svg style="left:1111px;top:732.4px;" width="12" height="12" viewBox="0 0 12 12"><circle cx="6" cy="6" r="4.2" fill="#a1a1a1" stroke="#1a1a1a" stroke-width="0.9"/></svg>
<svg style="left:1111px;top:752.7px;" width="12" height="12" viewBox="0 0 12 12"><circle cx="6" cy="6" r="4.2" fill="#6363c7" stroke="#1a1a1a" stroke-width="0.9"/></svg>
<div class="t" style="top:748.3px;color:#e6e6e6;font-size:10.8px;letter-spacing:-0.2px;left:1127.2px;">Normal</div>
<svg style="left:1126.5px;top:772.7px;" width="12" height="12" viewBox="0 0 12 12"><path d="M4.3 2.6 L7.7 6 L4.3 9.4" fill="none" stroke="#e0e0e0" stroke-width="1.2" stroke-linecap="round" stroke-linejoin="round"/></svg>
<div class="t" style="top:768.2px;color:#e6e6e6;font-size:10.8px;letter-spacing:-0.2px;left:1144.8px;">Diffuse</div>
<svg style="left:1126.5px;top:790.8px;" width="12" height="12" viewBox="0 0 12 12"><path d="M4.3 2.6 L7.7 6 L4.3 9.4" fill="none" stroke="#e0e0e0" stroke-width="1.2" stroke-linecap="round" stroke-linejoin="round"/></svg>
<div class="t" style="top:786.3px;color:#e6e6e6;font-size:10.8px;letter-spacing:-0.2px;left:1144.8px;">Subsurface</div>
<svg style="left:1126.5px;top:808.8px;" width="12" height="12" viewBox="0 0 12 12"><path d="M4.3 2.6 L7.7 6 L4.3 9.4" fill="none" stroke="#e0e0e0" stroke-width="1.2" stroke-linecap="round" stroke-linejoin="round"/></svg>
<div class="t" style="top:804.3px;color:#e6e6e6;font-size:10.8px;letter-spacing:-0.2px;left:1144.8px;">Specular</div>
<svg style="left:1126.5px;top:826.8px;" width="12" height="12" viewBox="0 0 12 12"><path d="M4.3 2.6 L7.7 6 L4.3 9.4" fill="none" stroke="#e0e0e0" stroke-width="1.2" stroke-linecap="round" stroke-linejoin="round"/></svg>
<div class="t" style="top:822.3px;color:#e6e6e6;font-size:10.8px;letter-spacing:-0.2px;left:1144.8px;">Transmission</div>
<svg style="left:1126.5px;top:845.5px;" width="12" height="12" viewBox="0 0 12 12"><path d="M4.3 2.6 L7.7 6 L4.3 9.4" fill="none" stroke="#e0e0e0" stroke-width="1.2" stroke-linecap="round" stroke-linejoin="round"/></svg>
<div class="t" style="top:841px;color:#e6e6e6;font-size:10.8px;letter-spacing:-0.2px;left:1144.8px;">Coat</div>
<svg style="left:1126.5px;top:863.5px;" width="12" height="12" viewBox="0 0 12 12"><path d="M4.3 2.6 L7.7 6 L4.3 9.4" fill="none" stroke="#e0e0e0" stroke-width="1.2" stroke-linecap="round" stroke-linejoin="round"/></svg>
<div class="t" style="top:859px;color:#e6e6e6;font-size:10.8px;letter-spacing:-0.2px;left:1144.8px;">Sheen</div>
<svg style="left:1126.5px;top:881.7px;" width="12" height="12" viewBox="0 0 12 12"><path d="M4.3 2.6 L7.7 6 L4.3 9.4" fill="none" stroke="#e0e0e0" stroke-width="1.2" stroke-linecap="round" stroke-linejoin="round"/></svg>
<div class="t" style="top:877.2px;color:#e6e6e6;font-size:10.8px;letter-spacing:-0.2px;left:1144.8px;">Emission</div>
<svg style="left:1126.5px;top:900.5px;" width="12" height="12" viewBox="0 0 12 12"><path d="M4.3 2.6 L7.7 6 L4.3 9.4" fill="none" stroke="#e0e0e0" stroke-width="1.2" stroke-linecap="round" stroke-linejoin="round"/></svg>
<div class="t" style="top:896px;color:#e6e6e6;font-size:10.8px;letter-spacing:-0.2px;left:1144.8px;">Thin Film</div>
<div style="left:1396.9px;top:607.4px;width:128px;height:127.6px;background:#303030;border-radius:5px;box-shadow:0 2px 8px rgba(0,0,0,0.5);"></div>
<div style="left:1396.9px;top:607.4px;width:128px;height:18.6px;background:#4a1a28;border-radius:5px 5px 0 0;"></div>
<div style="left:1395.9px;top:606.4px;width:130px;height:129.6px;border-radius:6px;border:1.4px solid #e4e4e4;"></div>
<svg style="left:1405.24px;top:609.9px;" width="12" height="12" viewBox="0 0 12 12"><path d="M2.67 4.33 L6 7.67 L9.33 4.33" fill="none" stroke="#e0e0e0" stroke-width="1.2" stroke-linecap="round" stroke-linejoin="round"/></svg>
<div class="t" style="top:605.8px;color:#e6e6e6;font-size:10.8px;letter-spacing:-0.2px;left:1421.41px;">Material Output</div>
<div style="left:1406px;top:632.4px;width:109.6px;height:16.5px;background:#282828;border-radius:3.5px;box-shadow:inset 0 0 0 1px #3d3d3d;"></div>
<div class="t" style="top:630.5px;color:#e6e6e6;font-size:10.8px;letter-spacing:-0.2px;left:1413px;">All</div>
<svg style="left:1503.3px;top:635.5px;" width="12" height="12" viewBox="0 0 12 12"><path d="M3.2 4.6 L6 7.4 L8.8 4.6" fill="none" stroke="#e0e0e0" stroke-width="1.1" stroke-linecap="round" stroke-linejoin="round"/></svg>
<svg style="left:1390.4px;top:655.2px;" width="12" height="12" viewBox="0 0 12 12"><circle cx="6" cy="6" r="4.2" fill="#63c763" stroke="#1a1a1a" stroke-width="0.9"/></svg>
<div class="t" style="top:651.2px;color:#e6e6e6;font-size:10.8px;letter-spacing:-0.2px;left:1407px;">Surface</div>
<svg style="left:1390.4px;top:675.2px;" width="12" height="12" viewBox="0 0 12 12"><circle cx="6" cy="6" r="4.2" fill="#63c763" stroke="#1a1a1a" stroke-width="0.9"/></svg>
<div class="t" style="top:671.2px;color:#e6e6e6;font-size:10.8px;letter-spacing:-0.2px;left:1407px;">Volume</div>
<svg style="left:1390.4px;top:695.2px;" width="12" height="12" viewBox="0 0 12 12"><circle cx="6" cy="6" r="4.2" fill="#6363c7" stroke="#1a1a1a" stroke-width="0.9"/></svg>
<div class="t" style="top:691.2px;color:#e6e6e6;font-size:10.8px;letter-spacing:-0.2px;left:1407px;">Displacement</div>
<svg style="left:1390.4px;top:715.2px;" width="12" height="12" viewBox="0 0 12 12"><circle cx="6" cy="6" r="4.2" fill="#a1a1a1" stroke="#1a1a1a" stroke-width="0.9"/></svg>
<div class="t" style="top:711.2px;color:#e6e6e6;font-size:10.8px;letter-spacing:-0.2px;left:1407px;">Thickness</div>
<div style="left:876.5px;top:447.5px;width:708px;height:25.5px;background:#1d1d1d;border-radius:5px 5px 0 0;"></div>
<div style="left:884px;top:450.2px;width:31.7px;height:19.4px;background:#282828;border-radius:4px;box-shadow:inset 0 0 0 1px #3d3d3d;"></div>
<svg style="left:888.05px;top:451.75px;" width="16.5" height="16.5" viewBox="0 0 16 16"><circle cx="8" cy="8" r="6.2" fill="none" stroke="#e6e6e6" stroke-width="1.2"/><path d="M4.2 7 A4 4 0 0 1 7 4.2" fill="none" stroke="#e6e6e6" stroke-width="1.2" stroke-linecap="round"/></svg>
<svg style="left:903px;top:455px;" width="12" height="12" viewBox="0 0 12 12"><path d="M3 4.5 L6 7.5 L9 4.5" fill="none" stroke="#cfcfcf" stroke-width="1.3" stroke-linecap="round" stroke-linejoin="round"/></svg>
<div style="left:921px;top:450.2px;width:90.6px;height:19.4px;background:#282828;border-radius:4px;box-shadow:inset 0 0 0 1px #3d3d3d;"></div>
<svg style="left:926px;top:452.5px;" width="15" height="15" viewBox="0 0 16 16"><rect x="4.2" y="4.2" width="7.6" height="7.6" fill="#e6e6e6"/><path d="M1.5 4.5 V2.3 A0.8 0.8 0 0 1 2.3 1.5 H4.5 M11.5 1.5 H13.7 A0.8 0.8 0 0 1 14.5 2.3 V4.5 M14.5 11.5 V13.7 A0.8 0.8 0 0 1 13.7 14.5 H11.5 M4.5 14.5 H2.3 A0.8 0.8 0 0 1 1.5 13.7 V11.5" fill="none" stroke="#e6e6e6" stroke-width="1.1" stroke-linecap="round"/></svg>
<div class="t" style="top:450px;color:#e6e6e6;font-size:11.7px;left:947px;">Object</div>
<svg style="left:998.5px;top:455px;" width="12" height="12" viewBox="0 0 12 12"><path d="M3 4.5 L6 7.5 L9 4.5" fill="none" stroke="#cfcfcf" stroke-width="1.3" stroke-linecap="round" stroke-linejoin="round"/></svg>
<div class="t" style="top:450px;color:#e6e6e6;font-size:11.7px;left:1023.7px;">View</div>
<div class="t" style="top:450px;color:#e6e6e6;font-size:11.7px;left:1065px;">Select</div>
<div class="t" style="top:450px;color:#e6e6e6;font-size:11.7px;left:1112px;">Add</div>
<div class="t" style="top:450px;color:#e6e6e6;font-size:11.7px;left:1149px;">Node</div>
<div style="left:1191.3px;top:453.75px;width:12.5px;height:12.5px;background:#4772b3;border-radius:3px;"></div>
<svg style="left:1191.3px;top:453.75px;" width="12.5" height="12.5" viewBox="0 0 12.5 12.5"><path d="M2.8 6.4 L5.2 9 L9.8 3.4" fill="none" stroke="#fff" stroke-width="1.7" stroke-linecap="round" stroke-linejoin="round"/></svg>
<div class="t" style="top:450px;color:#e6e6e6;font-size:11.7px;left:1207.5px;">Use Nodes</div>
<div style="left:1297px;top:450.2px;width:79.6px;height:19.4px;background:#282828;border-radius:4px;box-shadow:inset 0 0 0 1px #3d3d3d;"></div>
<div class="t" style="top:450px;color:#e6e6e6;font-size:11.7px;left:1305px;">Slot 1</div>
<svg style="left:1363.5px;top:455px;" width="12" height="12" viewBox="0 0 12 12"><path d="M3 4.5 L6 7.5 L9 4.5" fill="none" stroke="#cfcfcf" stroke-width="1.3" stroke-linecap="round" stroke-linejoin="round"/></svg>
<div class="clip" style="left:1381.8px;top:450.2px;width:202px;height:19.4px;">
<div style="left:0px;top:0px;width:215px;height:19.4px;background:#282828;border-radius:4px;box-shadow:inset 0 0 0 1px #3d3d3d;"></div>
<div style="left:32px;top:1px;width:92.5px;height:17.4px;background:#1d1d1d;"></div>
<div style="left:124.5px;top:1px;width:25px;height:17.4px;background:#545454;"></div>
<div style="left:149.2px;top:0px;width:19.3px;height:19.4px;background:#4772b3;"></div>
<div style="left:169px;top:0px;width:19.5px;height:19.4px;background:#545454;"></div>
<div style="left:189px;top:0px;width:26px;height:19.4px;background:#545454;"></div>
</div>
<svg style="left:1387.25px;top:452.75px;" width="14.5" height="14.5" viewBox="0 0 16 16"><circle cx="8" cy="8" r="6.4" fill="none" stroke="#e6e6e6" stroke-width="1.2"/><path d="M8 8 L8 1.6 A6.4 6.4 0 0 1 14.4 8 Z M8 8 L8 14.4 A6.4 6.4 0 0 1 1.6 8 Z" fill="#e6e6e6"/></svg>
<svg style="left:1401.5px;top:455px;" width="12" height="12" viewBox="0 0 12 12"><path d="M3 4.5 L6 7.5 L9 4.5" fill="none" stroke="#cfcfcf" stroke-width="1.3" stroke-linecap="round" stroke-linejoin="round"/></svg>
<div class="t" style="top:450px;color:#e6e6e6;font-size:11.11px;letter-spacing:-0.3px;left:1421.2px;">SHADER_TEST</div>
<div class="t" style="top:450px;color:#e6e6e6;font-size:11.7px;left:1518.7px;transform:translateX(-50%);">2</div>
<svg style="left:1532.05px;top:451.25px;" width="17.5" height="17.5" viewBox="0 0 16 16"><path d="M8 1.2 L13.6 3 V7.6 C13.6 11 11.2 13.6 8 14.9 C4.8 13.6 2.4 11 2.4 7.6 V3 Z" fill="#ffffff"/><path d="M5.1 7.8 L7.3 10.1 L11 5.6" fill="none" stroke="#4772b3" stroke-width="1.7" stroke-linecap="round" stroke-linejoin="round"/></svg>
<svg style="left:1552.75px;top:452.25px;" width="15.5" height="15.5" viewBox="0 0 16 16"><path d="M4.6 4.4 H1.4 V14.6 H11.6 V11.6" fill="none" stroke="#e6e6e6" stroke-width="1.2" stroke-linejoin="round"/><path d="M5.4 1.4 H11.4 L14.8 4.8 V10.6 H5.4 Z" fill="none" stroke="#e6e6e6" stroke-width="1.2" stroke-linejoin="round"/><path d="M11 1.4 V5.2 H14.8 Z" fill="#e6e6e6"/></svg>
<div class="clip" style="left:1571px;top:450.5px;width:12.5px;height:19px;">
<svg style="left:3px;top:3.5px;" width="12" height="12" viewBox="0 0 12 12"><path d="M2.4 2.4 L9.6 9.6 M9.6 2.4 L2.4 9.6" fill="none" stroke="#e6e6e6" stroke-width="1.3" stroke-linecap="round"/></svg>
</div>
<svg style="left:894px;top:487.5px;" width="15" height="15" viewBox="0 0 16 16"><rect x="4.2" y="4.2" width="7.6" height="7.6" fill="#e6e6e6"/><path d="M1.5 4.5 V2.3 A0.8 0.8 0 0 1 2.3 1.5 H4.5 M11.5 1.5 H13.7 A0.8 0.8 0 0 1 14.5 2.3 V4.5 M14.5 11.5 V13.7 A0.8 0.8 0 0 1 13.7 14.5 H11.5 M4.5 14.5 H2.3 A0.8 0.8 0 0 1 1.5 13.7 V11.5" fill="none" stroke="#e6e6e6" stroke-width="1.1" stroke-linecap="round"/></svg>
<div class="t" style="top:485px;color:#e6e6e6;font-size:11.7px;left:918px;">Cube</div>
<svg style="left:959.5px;top:489px;" width="12" height="12" viewBox="0 0 12 12"><path d="M4.2 2.4 L7.8 6 L4.2 9.6" fill="none" stroke="#d0d0d0" stroke-width="1.2" stroke-linecap="round" stroke-linejoin="round"/></svg>
<svg style="left:977.5px;top:487.5px;" width="15" height="15" viewBox="0 0 16 16"><path d="M4.6 3.2 H11.4 M3.9 5 L7.2 11.4 M12.1 5 L8.8 11.4" fill="none" stroke="#e6e6e6" stroke-width="1.3"/><rect x="1.3" y="1.4" width="3.5" height="3.5" fill="none" stroke="#e6e6e6" stroke-width="1.25"/><rect x="11.2" y="1.4" width="3.5" height="3.5" fill="none" stroke="#e6e6e6" stroke-width="1.25"/><rect x="6.25" y="11.2" width="3.5" height="3.5" fill="none" stroke="#e6e6e6" stroke-width="1.25"/></svg>
<div class="t" style="top:485px;color:#e6e6e6;font-size:11.7px;left:1001px;">Cube</div>
<svg style="left:1042.5px;top:489px;" width="12" height="12" viewBox="0 0 12 12"><path d="M4.2 2.4 L7.8 6 L4.2 9.6" fill="none" stroke="#d0d0d0" stroke-width="1.2" stroke-linecap="round" stroke-linejoin="round"/></svg>
<svg style="left:1060.75px;top:487.75px;" width="14.5" height="14.5" viewBox="0 0 16 16"><circle cx="8" cy="8" r="6.6" fill="#e6e6e6"/><path d="M8 8 L8 2.6 A5.4 5.4 0 0 0 2.6 8 Z M8 8 L8 13.4 A5.4 5.4 0 0 0 13.4 8 Z" fill="#1d1d1d"/></svg>
<div class="t" style="top:485px;color:#e6e6e6;font-size:11.11px;letter-spacing:-0.3px;left:1084px;">SHADER_TEST</div>
<div style="left:877px;top:494px;width:8px;height:18px;background:#262626;border-radius:0 4px 4px 0;"></div>
<svg style="left:874.5px;top:497px;" width="12" height="12" viewBox="0 0 12 12"><path d="M4.5 3 L7.5 6 L4.5 9" fill="none" stroke="#bdbdbd" stroke-width="1" stroke-linecap="round" stroke-linejoin="round"/></svg>
<div style="left:1313.2px;top:475.4px;width:244px;height:24.2px;background:#3d3d3d;border-radius:4px;"></div>
<svg style="left:1320px;top:482px;" width="12" height="12" viewBox="0 0 12 12"><path d="M4.2 2.4 L7.8 6 L4.2 9.6" fill="none" stroke="#d0d0d0" stroke-width="1.2" stroke-linecap="round" stroke-linejoin="round"/></svg>
<div class="t" style="top:478px;color:#e6e6e6;font-size:11.7px;left:1335px;">Annotations</div>
<svg style="left:1537.5px;top:486.5px;" width="10" height="4" viewBox="0 0 10 4"><rect x="0" y="0" width="1" height="1" fill="#8a8a8a"/><rect x="0" y="3" width="1" height="1" fill="#8a8a8a"/><rect x="3" y="0" width="1" height="1" fill="#8a8a8a"/><rect x="3" y="3" width="1" height="1" fill="#8a8a8a"/><rect x="6" y="0" width="1" height="1" fill="#8a8a8a"/><rect x="6" y="3" width="1" height="1" fill="#8a8a8a"/><rect x="9" y="0" width="1" height="1" fill="#8a8a8a"/><rect x="9" y="3" width="1" height="1" fill="#8a8a8a"/></svg>
<div style="left:1563px;top:472px;width:21px;height:560px;background:#1a1a1a;border-radius:0 0 5px 0;"></div>
<div style="left:1563.7px;top:478px;width:17px;height:42.6px;border-radius:0 4px 4px 0;border:1px solid #2f2f2f;border-left:none;"></div>
<div class="t" style="left:1572px;top:499.3px;color:#cfcfcf;font-size:12px;transform:translate(-50%,-50%) rotate(90deg);">Node</div>
<div style="left:1563.7px;top:527px;width:17px;height:40.5px;border-radius:0 4px 4px 0;border:1px solid #2f2f2f;border-left:none;"></div>
<div class="t" style="left:1572px;top:547.25px;color:#cfcfcf;font-size:12px;transform:translate(-50%,-50%) rotate(90deg);">Tool</div>
<div style="left:1563.7px;top:570.5px;width:17px;height:41.2px;background:#303030;border-radius:0 4px 4px 0;box-shadow:inset 0 0 0 1px #3a3a3a;"></div>
<div class="t" style="left:1572px;top:591.1px;color:#ffffff;font-size:12px;transform:translate(-50%,-50%) rotate(90deg);">View</div>
<div style="left:1563.7px;top:616px;width:17px;height:57px;border-radius:0 4px 4px 0;border:1px solid #2f2f2f;border-left:none;"></div>
<div class="t" style="left:1572px;top:644.5px;color:#cfcfcf;font-size:12px;transform:translate(-50%,-50%) rotate(90deg);">Options</div>
<div style="left:1563.7px;top:678.8px;width:17px;height:93.8px;border-radius:0 4px 4px 0;border:1px solid #2f2f2f;border-left:none;"></div>
<div class="t" style="left:1572px;top:725.7px;color:#cfcfcf;font-size:12px;transform:translate(-50%,-50%) rotate(90deg);">Node Wrangler</div>
<div style="left:885px;top:1027px;width:678px;height:3px;background:#383838;border-radius:1.5px;"></div>
<div style="left:876.5px;top:447.5px;width:708px;height:585px;border-radius:5px;box-shadow:inset 0 0 0 1px rgba(255,255,255,0.07);"></div>
<svg style="left:7.75px;top:1036.75px;" width="16.5" height="16.5" viewBox="0 0 16 16"><rect x="2.2" y="0.6" width="11.6" height="14.8" rx="3.6" fill="none" stroke="#8f8f8f" stroke-width="1.1"/><path d="M2.2 7.4 V4.2 A3.6 3.6 0 0 1 5.8 0.6 H7.6 V7.4 Z" fill="#8f8f8f"/></svg>
<div class="t" style="top:1035px;color:#a2a2a2;font-size:11.7px;left:24px;">Select</div>
<svg style="left:62.75px;top:1036.75px;" width="16.5" height="16.5" viewBox="0 0 16 16"><rect x="2.2" y="0.6" width="11.6" height="14.8" rx="3.6" fill="none" stroke="#8f8f8f" stroke-width="1.1"/><rect x="6.3" y="2.4" width="3.4" height="5.6" rx="1" fill="#8f8f8f"/></svg>
<div class="t" style="top:1035px;color:#a2a2a2;font-size:11.7px;left:79px;">Rotate View</div>
<svg style="left:148.75px;top:1036.75px;" width="16.5" height="16.5" viewBox="0 0 16 16"><rect x="2.2" y="0.6" width="11.6" height="14.8" rx="3.6" fill="none" stroke="#8f8f8f" stroke-width="1.1"/><path d="M13.8 7.4 V4.2 A3.6 3.6 0 0 0 10.2 0.6 H8.4 V7.4 Z" fill="#8f8f8f"/></svg>
<div class="t" style="top:1035px;color:#a2a2a2;font-size:11.7px;left:165px;">Options</div>
<div class="t" style="top:1035px;color:#a2a2a2;font-size:11.7px;left:1907px;transform:translateX(-100%);">4.5.8</div>
</div>
</body></html>
